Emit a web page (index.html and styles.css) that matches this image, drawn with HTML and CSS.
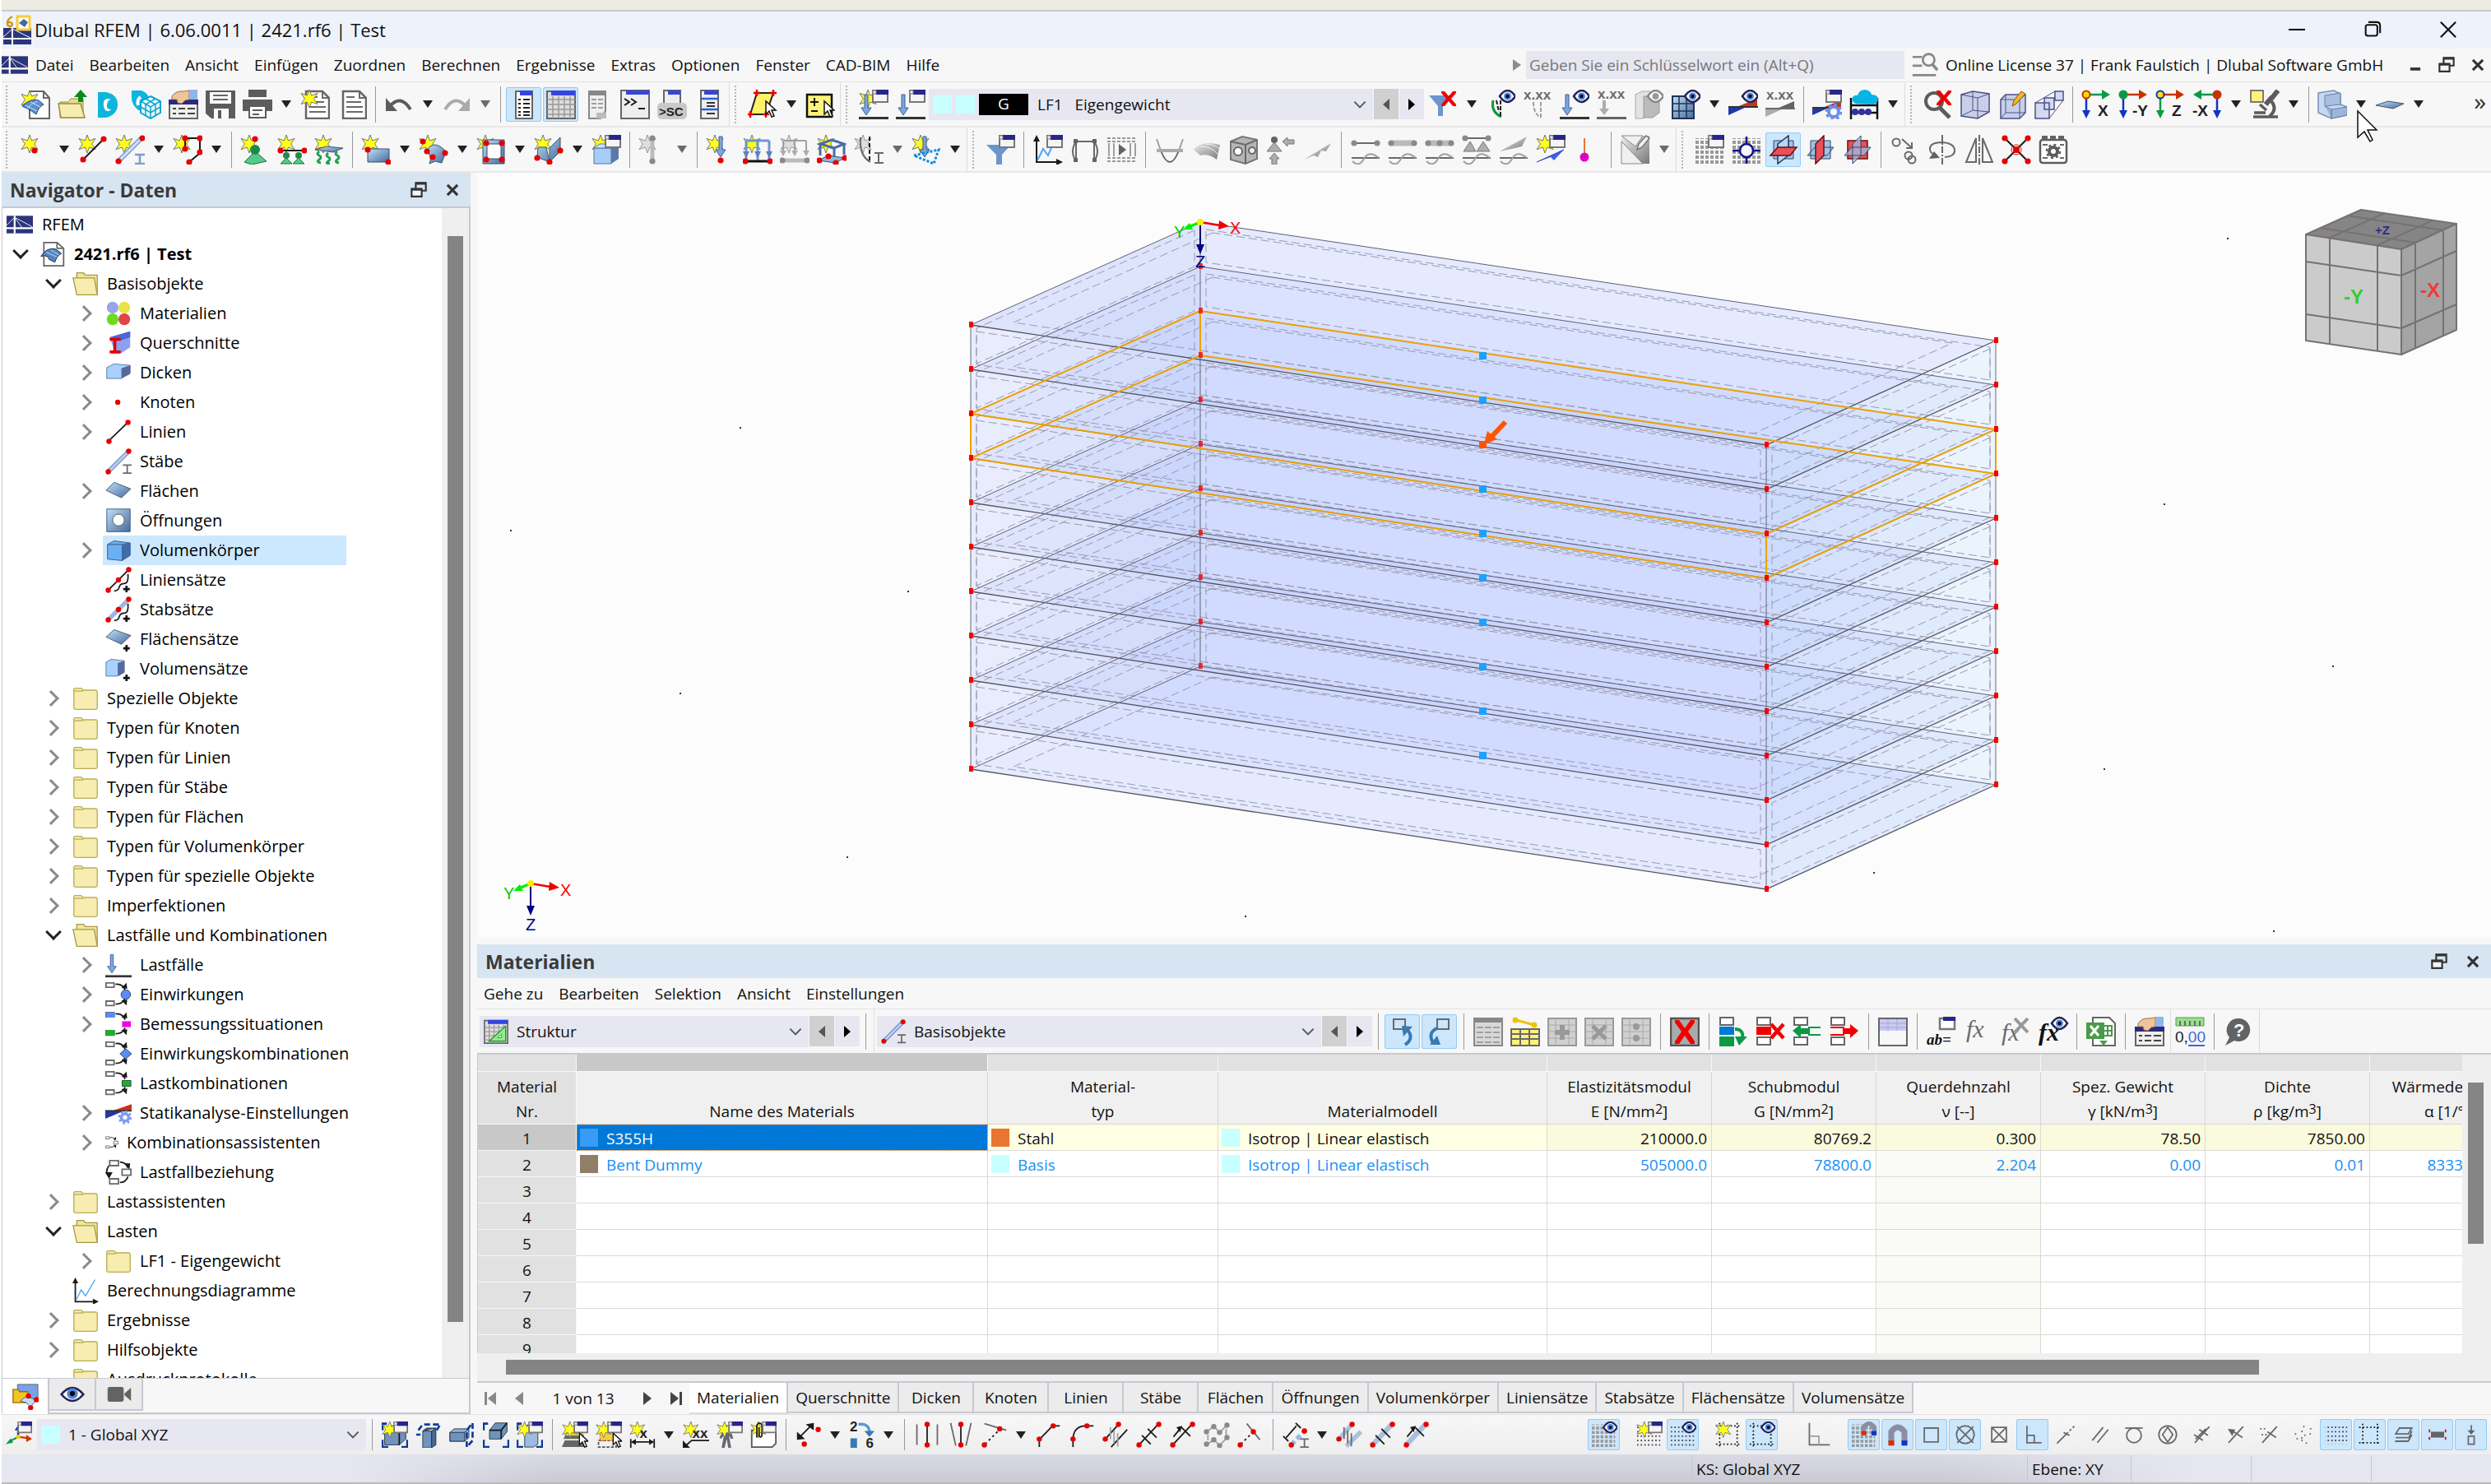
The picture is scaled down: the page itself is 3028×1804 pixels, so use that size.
FILE: index.html
```html
<!DOCTYPE html>
<html lang="de">
<head>
<meta charset="utf-8">
<title>Dlubal RFEM | 6.06.0011 | 2421.rf6 | Test</title>
<link rel="stylesheet" href="styles.css">
</head>
<body>
<svg class="sprite" aria-hidden="true">
<defs>
<linearGradient id="gb" x1="0" y1="0" x2="1" y2="1"><stop offset="0" stop-color="#bfe0fa"/><stop offset="1" stop-color="#47699c"/></linearGradient>
<linearGradient id="gg" x1="0" y1="0" x2="1" y2="1"><stop offset="0" stop-color="#eee"/><stop offset="1" stop-color="#777"/></linearGradient>
<pattern id="dots" width="6" height="6" patternUnits="userSpaceOnUse"><path d="M1 1h4v4H1z" fill="#999"/></pattern>
<pattern id="fine" width="5" height="6" patternUnits="userSpaceOnUse"><path d="M1 1h2v2H1z" fill="#445"/></pattern>
<path id="star" d="M11 0l2.6 7 7.4-2.6-4.4 6.6 4.4 6.6-7.4-2.6L11 22l-2.6-7L1 17.6 5.4 11 1 4.4 8.4 7z" fill="#ffff1a" stroke="#777"/>
<path id="gstar" d="M11 0l2.6 7 7.4-2.6-4.4 6.6 4.4 6.6-7.4-2.6L11 22l-2.6-7L1 17.6 5.4 11 1 4.4 8.4 7z" fill="#ddd" stroke="#999"/>
<g id="win"><path d="M17 1h18v14H17z" fill="#f4f4f4" stroke="#777" stroke-width="2"/><path d="M21 0h15v6H21z" fill="#26268c"/><path d="M17 1h4v4h-4z" fill="#eee" stroke="#777"/></g>
<g id="eye"><path d="M17 8q9.500-14 19 0q-9.500 14-19 0z" fill="#fff" stroke="#232358" stroke-width="2.500"/><circle cx="26.500" cy="8" r="4.500" fill="#4f86dd"/><circle cx="26.500" cy="8" r="2.200" fill="#001"/></g>
<g id="geye"><path d="M17 8q9.500-14 19 0q-9.500 14-19 0z" fill="#fff" stroke="#888" stroke-width="2.500"/><circle cx="26.500" cy="8" r="4" fill="#999"/></g>
<circle id="n" r="3.600" fill="#e60000"/>
<circle id="gn" r="3.600" fill="#8a8a8a"/>
<path id="cur" d="M0 0v16l4-4 3 7 3-1-3-7h5z" fill="#fff" stroke="#111" stroke-width="1.500"/>
<path id="redx" d="M16 2l4 0 5 6 5-6h4l0 2-6 7 6 7v2h-4l-5-6-5 6h-4v-2l6-7-6-7z" fill="#f00000"/>
<path id="larr" d="M7 6h4v16h4l-6 9-6-9h4z" fill="#7fa6dc" stroke="#3d5c94"/>
<g id="wave"><path d="M1 28h34" class="g" stroke-width="3"/><path d="M2 32q8 8 14-3t18-1" class="lg"/></g>
<g id="three"><path d="M4 7v24M18 7v24M32 7v24M4 7h28" stroke="#6f96d0" stroke-width="3" fill="none"/><path d="M0 20h8l-4 8zM14 20h8l-4 8zM28 20h8l-4 8z" fill="#5b80bd"/></g>
<g id="boxes"><path d="M1 2h11v6H1zM1 27h11v6H1z" class="g" fill="#fff"/><path d="M14 4q10-1 13 8M14 31q10 0 13-8" class="k"/><path d="M22 9l8 1-1-8zM22 26l8-1-1 8z" class="fk"/></g>
<g id="cubeb"><path d="M4 10l8-7h21v18l-9 8H4z" fill="#6f93bd" stroke="#234"/><path d="M4 10h20v19M24 10l9-7" class="k" stroke-width="1"/></g>
<g id="corner"><path d="M1 25v10h8M27 35h8V25M1 12V3h6" fill="none" stroke="#0b3a9c" stroke-width="3"/></g>
<path id="fold" d="M2 6q0-2 2-2h8l3 3h17q2 0 2 2v22q0 2-2 2H4q-2 0-2-2z" fill="#f7edb0" stroke="#b9ac55" stroke-width="1.500"/>
<path id="plus" d="M29 26v9M24.500 30.500h9" stroke="#111" stroke-width="3"/>
</defs>
<symbol id="logo" viewBox="0 0 36 36"><path d="M0 6h36v24H0z" fill="#2b3579"/><path d="M0 23h36M11 6v24" stroke="#fff" stroke-width="2.500"/><path d="M11 8L0 19M11 8l10 14M11 8l24 13" stroke="#fff" fill="none"/></symbol>
<symbol id="applogo" viewBox="0 0 36 36"><path d="M0 16h34v20H0z" fill="#2b3579"/><path d="M0 29h34M11 16v20" stroke="#fff" stroke-width="2"/><path d="M11 17L0 27M11 17l22 11" stroke="#fff" fill="none"/><path d="M17 2h15v16H17z" fill="#fff" stroke="#f7cc3a" stroke-width="3"/><path d="M19 10l6-5 5 4-4 6z" fill="#45699a"/><path d="M11 2Q4 6 5 11a3 3 0 0 0 6 0a3 3 0 0 0-5-1" fill="none" stroke="#c99a1c" stroke-width="2.500"/></symbol>
<symbol id="new" viewBox="0 0 36 36"><path d="M11 2h17l7 8v25H11z" fill="#fff" stroke="#666" stroke-width="2"/><path d="M28 2v8h7" class="g"/><use href="#star" y="1"/><path d="M2 20q10-10 20-7l6 5q-6 3-9 12l-7-5z" fill="#5d8fce" stroke="#234a80"/><path d="M6 19l14 7M12 15l12 6M7 24q6-8 14-10" stroke="#cfe0f5" fill="none"/></symbol>
<symbol id="open" viewBox="0 0 36 36"><path d="M3 34V15h10l3-4h15v23z" fill="#e8dc8c" stroke="#9a8f40"/><path d="M1 17h27l5 17H4z" fill="#f7edb0" stroke="#9a8f40" stroke-width="1.500"/><path d="M25 15V9h-5l8-9 8 9h-5v6z" fill="#0a8a1c"/></symbol>
<symbol id="cc" viewBox="0 0 36 36"><path d="M4 3h10q14 3 14 15T14 34H4z" fill="#0db5dd"/><path d="M20 12q-7-3-9 3-1 9 4 11 4 0 5-2-6 0-5-6t5-6z" fill="#fff"/></symbol>
<symbol id="cube3" viewBox="0 0 36 36"><path d="M0 1h12q9 3 9 12v12H8Q0 18 0 10z" fill="#0db5dd"/><path d="M11 9q-5 3-3 10" stroke="#fff" stroke-width="4" fill="none"/><path d="M23 8l12 6v14l-12 7-12-7V14z" fill="#e8fbff" stroke="#0aa5cc" stroke-width="2"/><path d="M11 14l12 7 12-7M23 21v14M17 11l12 7v14M29 11l-12 7v14M11 21l12 7 12-7" stroke="#0aa5cc" fill="none" stroke-width="1.500"/></symbol>
<symbol id="hand" viewBox="0 0 36 36"><path d="M1 14h34v21H1z" fill="#eee" stroke="#666" stroke-width="2"/><path d="M0 12h36v6H0z" fill="#2a2a80"/><path d="M5 23h4M12 23h8M23 23h9M5 29h4M12 29h8M23 29h9" stroke="#444" stroke-width="2"/><path d="M4 8Q9 1 18 2l7-1v11l-5 1-4 4-5-1-1-4-6 0z" fill="#f0c49a" stroke="#a06a44"/><path d="M25 0h10v12l-10 0z" fill="#8db7ea"/></symbol>
<symbol id="save" viewBox="0 0 36 36"><path d="M0 1h36v34H7l-7-6z" fill="#5c5c5c"/><path d="M5 3h26v14H5zM10 23h18v12H10z" fill="#fafafa"/><path d="M9 7h18M9 12h18" stroke="#666" stroke-width="2"/><path d="M15 25h4v10h-4z" fill="#5c5c5c"/></symbol>
<symbol id="print" viewBox="0 0 36 36"><path d="M7 0h22v9H7zM0 12h36v14H0z" fill="#5c5c5c"/><path d="M8 20h20v14H8z" fill="#fff" stroke="#5c5c5c" stroke-width="2"/><path d="M12 25h12M12 30h8" stroke="#5c5c5c" stroke-width="2"/></symbol>
<symbol id="doc" viewBox="0 0 36 36"><path d="M7 2h20l8 8v25H7z" fill="#fff" stroke="#666" stroke-width="2.500"/><path d="M27 2v8h8M11 15h18M11 21h20M11 27h20M11 9h10" class="g"/></symbol>
<symbol id="sdoc" viewBox="0 0 36 36"><use href="#doc" width="36" height="36"/><use href="#star"/></symbol>
<symbol id="undo" viewBox="0 0 36 36"><path d="M7 20Q20 5 32 24" fill="none" stroke="#5c5c5c" stroke-width="4"/><path d="M2 10v16h14z" fill="#5c5c5c"/></symbol>
<symbol id="redo" viewBox="0 0 36 36"><path d="M29 20Q16 5 4 24" fill="none" stroke="#aaa" stroke-width="4"/><path d="M34 10v16H20z" fill="#aaa"/></symbol>
<symbol id="list" viewBox="0 0 36 36"><path d="M8 2h20v33H8z" fill="#fff" stroke="#666" stroke-width="2"/><path d="M13 1h15v6H13z" fill="#3445e0"/><path d="M11 12h3M17 12h8M11 17h3M17 17h8M11 22h3M17 22h8M11 27h3M17 27h8M11 31h3M17 31h8" stroke="#222" stroke-width="2"/></symbol>
<symbol id="grid" viewBox="0 0 36 36"><path d="M1 2h34v33H1z" fill="#ddd" stroke="#666" stroke-width="2"/><path d="M6 1h29v6H6z" fill="#3445e0"/><path d="M1 12h34M1 18h34M1 24h34M1 30h34M8 8v27M15 8v27M22 8v27M29 8v27" stroke="#999" fill="none" stroke-width="1.500"/></symbol>
<symbol id="report" viewBox="0 0 36 36"><path d="M7 2h20v24l-6 9H7z" fill="#eee" stroke="#888" stroke-width="2"/><path d="M7 2h20v5H7z" fill="#888"/><path d="M10 12h6M18 12h6M10 17h6M18 17h6M10 22h6M18 22h6" class="lg"/><path d="M16 28h12v7H16z" fill="#bbb"/></symbol>
<symbol id="cons" viewBox="0 0 36 36"><path d="M1 1h34v34H1z" fill="#eee" stroke="#666" stroke-width="2"/><path d="M7 1h28v5H7z" fill="#3445e0"/><path d="M5 11l6 4-6 4M13 11l6 4-6 4M22 23h8" class="k" stroke-width="2.500"/></symbol>
<symbol id="panel" viewBox="0 0 36 36"><path d="M8 1h21v34H8z" fill="#eee" stroke="#666" stroke-width="2"/><path d="M12 1h17v5H12z" fill="#3445e0"/><path d="M8 11h21M8 24h21" stroke="#2a62d8" stroke-width="2.500"/><path d="M15 16h10M15 20h10M15 29h10" stroke="#333" stroke-width="2"/></symbol>
<symbol id="poly" viewBox="0 0 36 36"><path d="M11 4h20L22 30H3z" fill="#fff26b" stroke="#222" stroke-width="2"/><path d="M7 4h8M11 0v8M27 4h8M31 0v8M0 30h7M3 26v8M18 30h8M22 26v8" stroke="#e00" stroke-width="2.500"/><use href="#cur" x="22" y="14"/></symbol>
<symbol id="pm" viewBox="0 0 36 36"><path d="M2 6h30v27H2z" fill="#fff27c" stroke="#111" stroke-width="2.500"/><path d="M6 15h10M11 10v10M7 26h8" stroke="#111" stroke-width="2"/><use href="#cur" x="23" y="14"/></symbol>
<symbol id="sload" viewBox="0 0 36 36"><use href="#star"/><use href="#win"/><use href="#larr"/><path d="M0 33h36v3H0z" fill="#333"/></symbol>
<symbol id="load" viewBox="0 0 36 36"><use href="#win"/><use href="#larr"/><path d="M0 33h36v3H0z" fill="#333"/></symbol>
<symbol id="nload" viewBox="0 0 36 36"><use href="#larr" y="-2"/><path d="M0 32h36v3H0z" fill="#333"/></symbol>
<symbol id="filx" viewBox="0 0 36 36"><path d="M1 7h28L18 20v12h-6V20z" fill="#6d95cd"/><use href="#redx"/></symbol>
<symbol id="eyed" viewBox="0 0 36 36"><path d="M9 13q-3 14 10 20" fill="none" stroke="#0a9a3c" stroke-width="3"/><path d="M18 13v20M13 13l3 14" class="k" stroke-width="2.500" stroke-dasharray="5 2"/><use href="#eye"/></symbol>
<symbol id="eyel" viewBox="0 0 36 36"><use href="#eye"/><use href="#larr"/><path d="M0 33h36v3H0z" fill="#333"/></symbol>
<symbol id="geyeb" viewBox="0 0 36 36"><path d="M2 6l8-4h10v28l-9 5H2z" fill="#e2e2e2" stroke="#aaa"/><path d="M12 8h14l5 2v18l-8 6H12z" fill="#bbb" stroke="#999"/><use href="#geye"/></symbol>
<symbol id="mesh" viewBox="0 0 36 36"><path d="M2 8h26v27H2z" fill="url(#gb)" stroke="#235" stroke-width="2"/><path d="M2 17h26M2 26h26M10 8v27M19 8v27" stroke="#235" stroke-width="1.500"/><use href="#eye"/></symbol>
<symbol id="res" viewBox="0 0 36 36"><path d="M0 21h22L0 31z" fill="#2338a8"/><path d="M10 21L35 11v10z" fill="#c8331a"/><path d="M0 21h36" stroke="#333" stroke-width="2"/><use href="#eye"/></symbol>
<symbol id="calc" viewBox="0 0 36 36"><path d="M0 22h20L0 31z" fill="#2338a8"/><path d="M12 22L35 13v9z" fill="#c8331a"/><path d="M0 22h30" stroke="#333" stroke-width="2"/><use href="#win"/><circle cx="26" cy="27" r="6" fill="#fff" stroke="#6e8fe8" stroke-width="4"/><circle cx="26" cy="27" r="9" fill="none" stroke="#6e8fe8" stroke-width="3" stroke-dasharray="3.500 3.600"/></symbol>
<symbol id="cloud" viewBox="0 0 36 36"><path d="M2 10v26M34 10v26M2 19h32M2 28h32" stroke="#111" stroke-width="2.500"/><path d="M8 17q-6-2-4-8 3-3 6-2 2-7 9-7 7 1 8 6 8 0 8 6-1 5-6 6z" fill="#08b4e4"/><circle cx="7" cy="27" r="4" fill="#32329c"/><circle cx="15" cy="27" r="4" fill="#32329c"/><circle cx="23" cy="27" r="4" fill="#32329c"/></symbol>
<symbol id="magx" viewBox="0 0 36 36"><circle cx="13" cy="14" r="10" fill="none" stroke="#5c5c5c" stroke-width="4"/><path d="M20 22l12 12" stroke="#5c5c5c" stroke-width="5"/><use href="#redx" y="-1"/></symbol>
<symbol id="wbox" viewBox="0 0 36 36"><path d="M1 6l14-4 20 3v22l-14 8L1 32z" fill="#c9cfe8" stroke="#4a5288" stroke-width="1.500"/><path d="M1 6l20 4 14-5M21 10v25M15 2v23L1 32M15 25l20 2" fill="none" stroke="#4a5288"/></symbol>
<symbol id="pbox" viewBox="0 0 36 36"><path d="M4 12l6-6h24v22l-7 7H4z" fill="#c9cfe8" stroke="#4a5288" stroke-width="1.500"/><path d="M4 12h23v23M27 12l7-6M10 6v22l-6 7M10 28h24" fill="none" stroke="#4a5288"/><path d="M18 20l2-7L29 2l5 3-11 12z" fill="#f4b32c" stroke="#8a5a10"/></symbol>
<symbol id="persp" viewBox="0 0 36 36"><path d="M1 16h17v19H1zM12 10h12v14H12zM25 2h10v11H25z" fill="#d5d9f0" stroke="#4a5288" stroke-width="1.500"/><path d="M1 16L25 2M18 35L35 13" stroke="#4a5288"/></symbol>
<symbol id="micro" viewBox="0 0 36 36"><path d="M1 1h15v14H1z" fill="#fff27c" stroke="#555" stroke-width="1.500"/><path d="M34 1l-8 10M27 9l-8 9" stroke="#5c5c5c" stroke-width="6"/><path d="M26 14q8 10-2 18" fill="none" stroke="#5c5c5c" stroke-width="4"/><path d="M4 33h30M5 28h14M12 18l8 7" stroke="#5c5c5c" stroke-width="3.500"/></symbol>
<symbol id="chair" viewBox="0 0 36 36"><path d="M1 4l19-3 8 4v13l8 3v10l-19 4-16-7z" fill="#c3d9f4" stroke="#7890b4" stroke-width="1.500"/><path d="M9 7l19-3v14l-19 2z" fill="#a9bfe0" stroke="#6a82a8"/><path d="M9 20l8 4v11M17 24l19-3v10l-19 4z" fill="#9db5d8" stroke="#6a82a8"/></symbol>
<symbol id="plane" viewBox="0 0 36 36"><path d="M1 19l15-5 19 3-13 6z" fill="url(#gb)" stroke="#456" stroke-width="1"/></symbol>
<symbol id="snode" viewBox="0 0 36 36"><use href="#star"/><use href="#n" x="17" y="19"/></symbol>
<symbol id="sline" viewBox="0 0 36 36"><use href="#star"/><path d="M6 30L31 5" class="k" stroke-width="2.500"/><use href="#n" x="6" y="30"/><use href="#n" x="31" y="5"/></symbol>
<symbol id="smem" viewBox="0 0 36 36"><use href="#star"/><path d="M4 32L32 4" stroke="#7f9bd0" stroke-width="6"/><path d="M4 32L32 4" stroke="#cfe0fa" stroke-width="3"/><use href="#n" x="4" y="32"/><use href="#n" x="33" y="4"/><path d="M24 24h12M24 35h12M30 24v11" stroke="#7f9bd0" stroke-width="2.500"/></symbol>
<symbol id="spoly" viewBox="0 0 36 36"><use href="#star"/><path d="M15 17V4h18v18L20 33" class="k" stroke-width="2.500"/><use href="#n" x="15" y="17"/><use href="#n" x="15" y="4"/><use href="#n" x="33" y="4"/><use href="#n" x="33" y="21"/><use href="#n" x="20" y="33"/></symbol>
<symbol id="ssup" viewBox="0 0 36 36"><use href="#star"/><use href="#n" x="18" y="5"/><path d="M18 20L5 33l9 3 18-4z" fill="#58c88a" stroke="#0a7a3c"/><circle cx="18" cy="18" r="6" fill="#1c8a48"/></symbol>
<symbol id="slsup" viewBox="0 0 36 36"><use href="#star"/><path d="M4 19h30" class="k"/><use href="#n" x="4" y="19"/><use href="#n" x="33" y="19"/><path d="M11 28l-7 7h14zM26 28l-7 7h14z" fill="#58c88a" stroke="#0a7a3c"/><circle cx="11" cy="25" r="4" fill="#1c8a48"/><circle cx="26" cy="25" r="4" fill="#1c8a48"/></symbol>
<symbol id="sssup" viewBox="0 0 36 36"><use href="#star"/><path d="M1 18l14-4 20 2-12 5z" fill="url(#gb)" stroke="#456"/><path d="M6 20q-4 3 0 5t0 5 2 4M17 22q-4 3 0 5t0 5 2 3M28 20q-4 3 0 5t0 5 2 4" fill="none" stroke="#20a050" stroke-width="3"/></symbol>
<symbol id="srect" viewBox="0 0 36 36"><use href="#star"/><path d="M8 17h26v16H8z" fill="url(#gb)" stroke="#356"/><use href="#n" x="8" y="18"/><use href="#n" x="33" y="33"/></symbol>
<symbol id="scurv" viewBox="0 0 36 36"><use href="#star"/><path d="M9 20Q18 4 33 20l-5 14-8-2-7 3q4-10-4-15z" fill="url(#gb)" stroke="#356"/><use href="#n" x="5" y="8"/><use href="#n" x="10" y="20"/><use href="#n" x="32" y="22"/><use href="#n" x="17" y="27"/></symbol>
<symbol id="sopen" viewBox="0 0 36 36"><use href="#star"/><path d="M8 6h26v29H8z" fill="url(#gb)" stroke="#356"/><path d="M13 11h17v18H13z" fill="#fff" stroke="#356"/><use href="#n" x="12" y="10"/><use href="#n" x="31" y="10"/><use href="#n" x="12" y="30"/><use href="#n" x="31" y="30"/></symbol>
<symbol id="sfold" viewBox="0 0 36 36"><use href="#star"/><path d="M5 15h10l4 18-15-6zM19 33V16L32 3v17z" fill="url(#gb)" stroke="#356"/><use href="#n" x="4" y="28"/><use href="#n" x="19" y="33"/><use href="#n" x="32" y="19"/></symbol>
<symbol id="ssol" viewBox="0 0 36 36"><use href="#star"/><path d="M3 16h21v19H3z" fill="#a6cdf9" stroke="#579"/><path d="M3 16l7-5h24l-10 5z" fill="#c9e2ff" stroke="#579"/><path d="M24 16l9-5v18l-9 6z" fill="#5c78aa"/><use href="#win"/></symbol>
<symbol id="gmem" viewBox="0 0 36 36"><use href="#gstar"/><path d="M17 4v28" stroke="#bbb" stroke-width="5"/><use href="#gn" x="17" y="4"/><use href="#gn" x="17" y="32"/></symbol>
<symbol id="lnode" viewBox="0 0 36 36"><use href="#star"/><use href="#larr" x="9" y="-4"/><use href="#n" x="18" y="31"/></symbol>
<symbol id="lline" viewBox="0 0 36 36"><use href="#star"/><use href="#three"/><path d="M3 32h30" stroke="#111" stroke-width="3"/><use href="#n" x="3" y="32"/><use href="#n" x="33" y="32"/></symbol>
<symbol id="lmem" viewBox="0 0 36 36"><use href="#gstar"/><path d="M4 7v18M18 7v18M32 7v18M4 7h28" class="lg"/><path d="M0 19h8l-4 7zM14 19h8l-4 7zM28 19h8l-4 7z" class="flg"/><path d="M3 31h30" stroke="#bbb" stroke-width="5"/><use href="#gn" x="3" y="31"/><use href="#gn" x="33" y="31"/></symbol>
<symbol id="lsurf" viewBox="0 0 36 36"><use href="#star"/><path d="M4 11l14-5 15 5-12 5zM4 11v14M21 16v12M33 11v13" fill="none" stroke="#4a6ca8" stroke-width="3"/><path d="M2 31l12-6 20 3-12 6z" fill="#8fb6e4" stroke="#356"/><use href="#n" x="3" y="31"/><use href="#n" x="14" y="26"/><use href="#n" x="34" y="28"/><use href="#n" x="23" y="34"/></symbol>
<symbol id="gimp" viewBox="0 0 36 36"><use href="#gstar"/><path d="M8 3q-2 22 12 30" class="g" stroke-width="3"/><path d="M19 2v31" class="k" stroke-dasharray="5 3"/><path d="M25 22h11M25 34h11M30 22v12" class="g"/></symbol>
<symbol id="sfree" viewBox="0 0 36 36"><use href="#star"/><use href="#larr" x="7" y="-4"/><path d="M3 25l30-7-6 17z" fill="none" stroke="#0a8ade" stroke-width="3" stroke-dasharray="3 2"/></symbol>
<symbol id="fil" viewBox="0 0 36 36"><path d="M1 12h30L20 24v12h-7V24z" fill="#6d95cd"/><use href="#win"/></symbol>
<symbol id="diag" viewBox="0 0 36 36"><path d="M4 5v28h28" class="k" stroke-width="2.500"/><path d="M0 8l4-8 4 8zM28 29v8l8-4z" class="fk"/><path d="M5 31l7-14 6 8 6-14" fill="none" stroke="#49a8f4" stroke-width="2"/><use href="#win"/></symbol>
<symbol id="ndiag" viewBox="0 0 36 36"><path d="M4 5v28h28" class="k" stroke-width="2"/><path d="M0 8l4-8 4 8zM28 29v8l8-4z" class="fk"/><path d="M5 31l7-14 6 8L31 3" fill="none" stroke="#49a8f4" stroke-width="1.500"/></symbol>
<symbol id="frame" viewBox="0 0 36 36"><path d="M7 32V8h22v24M7 8Q-1 20 7 32M29 8q8 12 0 24" class="g"/><path d="M4 5h5v5H4zM27 5h5v5h-5zM4 28h5v5H4zM27 28h5v5h-5z" class="fg"/></symbol>
<symbol id="film" viewBox="0 0 36 36"><path d="M0 4h36M0 8h36M0 28h36M0 32h36" stroke="#999" stroke-width="2" stroke-dasharray="4 2"/><path d="M8 10v16M28 10v16M2 10v16M34 10v16" class="lg"/><path d="M14 11v14l9-7z" class="fg"/></symbol>
<symbol id="para" viewBox="0 0 36 36"><path d="M2 5l5 14h22l5-14" class="lg"/><path d="M7 19q11 28 22 0" class="g"/><path d="M2 19h32" stroke="#aaa" stroke-width="4"/></symbol>
<symbol id="fan" viewBox="0 0 36 36"><path d="M2 18Q12 6 34 12l-4 18q-10-8-20-5z" fill="url(#gg)"/><path d="M10 14q14 0 22 10M16 11q12 0 17 6" fill="none" stroke="#eee"/></symbol>
<symbol id="die" viewBox="0 0 36 36"><path d="M2 8l14-6 18 4v23l-14 6-18-5z" fill="#b5b5b5" stroke="#777" stroke-width="2"/><path d="M2 8l18 4 14-6M20 12v23" class="g"/><circle cx="11" cy="20" r="5" fill="#fff" stroke="#666" stroke-width="2"/><circle cx="28" cy="19" r="4" fill="#eee" stroke="#666" stroke-width="2"/></symbol>
<symbol id="reac" viewBox="0 0 36 36"><circle cx="10" cy="6" r="4" class="fg"/><path d="M10 9L1 20h18zM10 22l6 7h-3v7H7v-7H4z" class="flg" stroke="#777"/><path d="M20 8l6-5v3h8v5h-8v3z" class="flg" stroke="#777"/></symbol>
<symbol id="wedge" viewBox="0 0 36 36"><path d="M1 30L34 10l-6 10-6-1-4 8-5-2z" fill="url(#gg)"/></symbol>
<symbol id="w1" viewBox="0 0 36 36"><path d="M4 10h28" class="g" stroke-width="3"/><use href="#gn" x="4" y="10"/><use href="#gn" x="32" y="10"/><use href="#wave"/></symbol>
<symbol id="w2" viewBox="0 0 36 36"><path d="M4 10h28" stroke="#bbb" stroke-width="7"/><use href="#gn" x="4" y="10"/><use href="#gn" x="32" y="10"/><use href="#wave"/></symbol>
<symbol id="w3" viewBox="0 0 36 36"><path d="M4 10h28" stroke="#bbb" stroke-width="7"/><use href="#gn" x="4" y="10"/><use href="#gn" x="18" y="10"/><use href="#gn" x="32" y="10"/><use href="#wave"/></symbol>
<symbol id="w4" viewBox="0 0 36 36"><path d="M4 4h28" class="g" stroke-width="3"/><use href="#gn" x="4" y="4"/><use href="#gn" x="32" y="4"/><path d="M10 8L2 20h15zM26 8l-8 12h16z" class="flg" stroke="#777"/><use href="#wave"/></symbol>
<symbol id="w5" viewBox="0 0 36 36"><path d="M1 20L34 2l-6 12-8 2z" fill="url(#gg)"/><use href="#wave"/></symbol>
<symbol id="sres" viewBox="0 0 36 36"><path d="M1 33l33-15-12 13-4-4z" fill="#3e62f0"/><path d="M1 33l33-15" stroke="#223a9a"/><use href="#star"/><use href="#win"/></symbol>
<symbol id="pin" viewBox="0 0 36 36"><path d="M14 4v20" stroke="#e8743a" stroke-width="2"/><circle cx="14" cy="27" r="5.500" fill="#e000c8"/></symbol>
<symbol id="gpen" viewBox="0 0 36 36"><path d="M1 1h34v34H1z" fill="url(#gg)"/><path d="M1 8l26 27H1zM1 1h26L18 14z" fill="#f0f0f0" stroke="#888"/><path d="M20 18l2-7L31 1l4 3-9 11z" fill="#eee" stroke="#777" stroke-width="1.500"/></symbol>
<symbol id="gridwin" viewBox="0 0 36 36"><path d="M1 4h34v31H1z" fill="url(#dots)"/><use href="#win"/></symbol>
<symbol id="gridc" viewBox="0 0 36 36"><path d="M1 4h34v31H1z" fill="url(#dots)"/><path d="M18 2v33M1 19h34" stroke="#10108c" stroke-width="2.500"/><circle cx="18" cy="19" r="8" fill="#f7f7f7" stroke="#10108c" stroke-width="2.500"/></symbol>
<symbol id="pl1" viewBox="0 0 36 36"><path d="M6 7h24v22H6z" fill="#9cc4ec" stroke="#346"/><path d="M11 35V11L24 1v24z" fill="#b9d6f4" stroke="#235" stroke-width="1.500"/><path d="M2 25l9-10h23l-8 10z" fill="#e8505a" stroke="#611" stroke-width="1.500"/></symbol>
<symbol id="pl2" viewBox="0 0 36 36"><path d="M6 7h24v22H6zM2 25l9-10h23l-8 10z" fill="#9cc4ec" stroke="#346"/><path d="M12 35V11L22 1v24z" fill="#e8505a" stroke="#611" stroke-width="1.500"/></symbol>
<symbol id="pl3" viewBox="0 0 36 36"><path d="M6 7h24v22H6z" fill="#e8505a" stroke="#611" stroke-width="1.500"/><path d="M2 25l9-10h23l-8 10zM12 35V11L22 1v24z" fill="#9cc4ec" fill-opacity=".7" stroke="#346"/></symbol>
<symbol id="chain" viewBox="0 0 36 36"><circle cx="7" cy="9" r="4.500" class="g"/><circle cx="22" cy="25" r="4.500" class="g"/><circle cx="26" cy="30" r="4.500" class="g"/><path d="M14 5l11 10M26 9v7h-7" class="g"/></symbol>
<symbol id="rot" viewBox="0 0 36 36"><path d="M12 25Q2 23 3 16T18 9q14 1 15 9t-12 9" class="g" stroke-width="3"/><path d="M8 20l-6 9 13-1z" class="fg"/><path d="M18 0v36" class="g" stroke-dasharray="8 2 2 2"/></symbol>
<symbol id="mirr" viewBox="0 0 36 36"><path d="M14 4v29H2zM22 4v29h12z" class="g" stroke-width="2.500"/><path d="M18 0v36" class="g" stroke-dasharray="8 2 2 2"/></symbol>
<symbol id="xconn" viewBox="0 0 36 36"><path d="M4 4l28 28M32 4L4 32" class="k" stroke-width="2.500"/><use href="#n" x="4" y="4"/><use href="#n" x="32" y="4"/><use href="#n" x="4" y="32"/><use href="#n" x="32" y="32"/><circle cx="18" cy="18" r="4" fill="#e60000"/><circle cx="18" cy="18" r="6" fill="none" stroke="#e60000"/></symbol>
<symbol id="gear" viewBox="0 0 36 36"><rect x="2" y="6" width="32" height="28" rx="3" fill="#fff" stroke="#5c5c5c" stroke-width="2.500"/><path d="M4 1h7v5H4zM14 1h7v5h-7zM24 1h7v5h-7z" class="fg"/><circle cx="18" cy="20" r="5" fill="none" stroke="#5c5c5c" stroke-width="4"/><circle cx="18" cy="20" r="8" fill="none" stroke="#5c5c5c" stroke-width="2.500" stroke-dasharray="3 3.300"/><path d="M5 12h6M5 28h6M26 12h5M26 28h5" class="g"/></symbol>
<symbol id="file" viewBox="0 0 36 36"><path d="M6 2h18l9 8v24H6z" fill="#fff" stroke="#666" stroke-width="2"/><path d="M24 2v8h9" class="g"/><path d="M2 21Q10 8 22 11l8 6q-6 3-9 12l-8-4-1-3-5-2z" fill="#5486c4" stroke="#123"/><path d="M9 15l15 7M15 12l12 7" stroke="#cde" fill="none"/></symbol>
<symbol id="folder" viewBox="0 0 36 36"><use href="#fold"/><path d="M2 8h12l2-1h17" fill="none" stroke="#c9bd6a" stroke-width="2"/></symbol>
<symbol id="foldo" viewBox="0 0 36 36"><path d="M6 30V3h9l3 3h16v26z" fill="#f0e59c" stroke="#a89b45" stroke-width="1.500"/><path d="M1 10h29l4 23H6z" fill="#f7edb0" stroke="#a89b45" stroke-width="1.500"/></symbol>
<symbol id="mat" viewBox="0 0 36 36"><circle cx="10" cy="10" r="8" fill="#9aa4e8"/><circle cx="26" cy="10" r="8" fill="#e8e24a"/><circle cx="10" cy="26" r="8" fill="#6adc1c"/><circle cx="26" cy="26" r="8" fill="#e04444"/></symbol>
<symbol id="cs" viewBox="0 0 36 36"><path d="M6 10l28-8v22L20 33H8l4-6z" fill="#8ca0f0"/><path d="M6 10l28-8v8l-14 5z" fill="#4a66d8"/><path d="M6 13h15M6 30h15M13 13v17" stroke="#e00000" stroke-width="4"/></symbol>
<symbol id="thick" viewBox="0 0 36 36"><path d="M2 11l10-5 22 2v10l-12 8H2z" fill="#a9d0ff" stroke="#579"/><path d="M22 12l12-4v12l-12 6z" fill="#56699c"/></symbol>
<symbol id="node" viewBox="0 0 36 36"><use href="#n" x="17" y="18"/></symbol>
<symbol id="line" viewBox="0 0 36 36"><path d="M5 30L31 5" class="k" stroke-width="2.500"/><use href="#n" x="5" y="31"/><use href="#n" x="31" y="5"/></symbol>
<symbol id="mem" viewBox="0 0 36 36"><path d="M4 32L32 4" stroke="#7b8fc0" stroke-width="6"/><path d="M4 32L32 4" stroke="#b9d0f4" stroke-width="3"/><use href="#n" x="4" y="32"/><use href="#n" x="32" y="4"/><path d="M24 23h12M24 34h12M30 23v11" class="g" stroke-width="2.500"/></symbol>
<symbol id="surf" viewBox="0 0 36 36"><path d="M1 17L12 6l23 9-13 12z" fill="url(#gb)" stroke="#456"/></symbol>
<symbol id="hole" viewBox="0 0 36 36"><path d="M2 2h32v31H2z" fill="url(#gb)" stroke="#357"/><circle cx="18" cy="17" r="8" fill="#fff" stroke="#555"/></symbol>
<symbol id="vol" viewBox="0 0 36 36"><path d="M3 10l9-5 22 3v17l-11 7-20-2z" fill="#6cb0f4" stroke="#357"/><path d="M3 10h20v22M23 10l11-2" fill="none" stroke="#357"/><path d="M23 11l11-3v17l-11 7z" fill="#3d6ca8"/></symbol>
<symbol id="lset" viewBox="0 0 36 36"><path d="M4 32L32 4" class="k" stroke-width="3"/><path d="M12 33q6 0 7-5t7-5 5-13" class="k" stroke-width="1.500"/><use href="#n" x="4" y="32"/><use href="#n" x="18" y="18"/><use href="#n" x="32" y="4"/><use href="#plus"/></symbol>
<symbol id="mset" viewBox="0 0 36 36"><path d="M4 32L32 4" stroke="#9db8e4" stroke-width="6"/><path d="M12 33q6 0 7-5t7-5 5-13" class="k" stroke-width="1.500"/><use href="#n" x="4" y="32"/><use href="#n" x="18" y="18"/><use href="#n" x="32" y="4"/><use href="#plus"/></symbol>
<symbol id="sset" viewBox="0 0 36 36"><path d="M1 15L12 5l23 8-13 12z" fill="url(#gb)" stroke="#456"/><use href="#plus"/></symbol>
<symbol id="vset" viewBox="0 0 36 36"><path d="M1 9l7-4 18 2v16l-9 5H1z" fill="#a9d0ff" stroke="#579"/><path d="M17 10l9-3v16l-9 5z" fill="#56699c"/><use href="#plus"/></symbol>
<symbol id="act" viewBox="0 0 36 36"><use href="#boxes"/><circle cx="28" cy="18" r="6.500" fill="#5a8cf8" stroke="#345"/></symbol>
<symbol id="situ" viewBox="0 0 36 36"><use href="#boxes"/><path d="M1 2h12v7H1z" fill="#5a8cf8"/><path d="M1 26h12v7H1z" fill="#1cb028"/><path d="M23 14h12v8H23z" fill="#f000e8"/></symbol>
<symbol id="acomb" viewBox="0 0 36 36"><use href="#boxes"/><path d="M28 11l8 7-8 7-8-7z" fill="#5a8cf8" stroke="#345"/></symbol>
<symbol id="lcomb" viewBox="0 0 36 36"><use href="#boxes"/><path d="M23 14h12v8H23z" fill="#1cb028" stroke="#243"/></symbol>
<symbol id="stat" viewBox="0 0 36 36"><path d="M0 15h26L0 26z" fill="#2338a8"/><path d="M10 15L36 6v9z" fill="#c8331a"/><path d="M0 15h36" stroke="#333" stroke-width="2"/><circle cx="27" cy="24" r="5" fill="#fff" stroke="#7c9cf0" stroke-width="4"/><circle cx="27" cy="24" r="8" fill="none" stroke="#7c9cf0" stroke-width="3" stroke-dasharray="3 3.280"/></symbol>
<symbol id="wiz" viewBox="0 0 36 36"><use href="#boxes"/><path d="M23 14h12v8H23z" class="g" fill="#fff"/></symbol>
<symbol id="rel" viewBox="0 0 36 36"><path d="M6 2h12v7H6zM23 14h12v8H23zM6 27h12v7H6z" class="g" fill="#fff" stroke-width="2.500"/><path d="M20 4q8 0 11 8M20 32q8 0 11-8M5 9q-4 5-3 12" class="k"/><path d="M0 18h10l-5 9zM26 6l8 0-1 8z" class="fk"/></symbol>
<symbol id="nav1" viewBox="0 0 36 36"><path d="M7 1h28v22H7z" fill="#7aa0e8" stroke="#567"/><path d="M1 26V8h7l2 3h11v15z" fill="#f4c420" stroke="#96700a" stroke-width="1.500"/><path d="M11 24q6-7 11-6l11 5q-4 3-8 9l-6-6z" fill="#bcdcf8" stroke="#357"/><use href="#n" x="22" y="17"/><use href="#n" x="33" y="22"/><use href="#n" x="25" y="33"/></symbol>
<symbol id="nav2" viewBox="0 0 36 36"><path d="M3 18q15-18 30 0q-15 18-30 0z" fill="#fff" stroke="#232358" stroke-width="3"/><circle cx="18" cy="17" r="7.500" fill="#4f86dd"/><circle cx="18" cy="17" r="3.500"/></symbol>
<symbol id="nav3" viewBox="0 0 36 36"><rect x="2" y="8" width="22" height="20" rx="3" class="fg"/><path d="M25 17l9-8v18l-9-8z" class="fg"/></symbol>
<symbol id="tstruct" viewBox="0 0 36 36"><use href="#grid" width="36" height="36"/><path d="M32 10v22H8z" fill="#8af08a" stroke="#2a8a2a" stroke-width="1.500"/><path d="M26 22v5h-6z" fill="#fff" stroke="#2a8a2a"/></symbol>
<symbol id="sel1" viewBox="0 0 36 36"><path d="M7 3h14v12H7z" class="g" fill="#fff"/><path d="M21 34q12-8 2-19" fill="none" stroke="#3a78b4" stroke-width="4"/><path d="M17 11l13 1-11 12z" fill="#3a78b4"/></symbol>
<symbol id="sel2" viewBox="0 0 36 36"><path d="M15 3h14v12H15z" class="g" fill="#fff"/><path d="M15 14q-12 5-5 18" fill="none" stroke="#3a78b4" stroke-width="4"/><path d="M6 34h13l-4-11z" fill="#3a78b4"/></symbol>
<symbol id="tg" viewBox="0 0 36 36"><path d="M1 2h34v33H1z" fill="#d8d8d8" stroke="#888" stroke-width="2"/><path d="M1 2h34v5H1z" fill="#888"/><path d="M4 13h8M14 13h8M24 13h8M4 19h8M14 19h8M24 19h8M4 25h8M14 25h8M24 25h8M4 31h8M14 31h8M24 31h8" class="lg" stroke-width="3"/></symbol>
<symbol id="ty" viewBox="0 0 36 36"><path d="M1 15h34v20H1z" fill="#fff27c" stroke="#666" stroke-width="2"/><path d="M2 21h32M2 27h32M12 15v20M23 15v20" class="g" stroke-width="1.500"/><path d="M7 4l22 6" stroke="#f0c400" stroke-width="3"/><circle cx="6" cy="4" r="3.500" fill="#f0c400"/><circle cx="29" cy="10" r="3.500" fill="#f0c400"/></symbol>
<symbol id="tplus" viewBox="0 0 36 36"><path d="M1 2h34v33H1z" fill="#d0d0d0" stroke="#999" stroke-width="2"/><path d="M1 10h34M1 18h34M1 26h34M10 2v33M26 2v33" stroke="#aaa"/><path d="M15 10h6v6h6v6h-6v6h-6v-6H9v-6h6z" fill="#999"/></symbol>
<symbol id="tmul" viewBox="0 0 36 36"><path d="M1 2h34v33H1z" fill="#d0d0d0" stroke="#999" stroke-width="2"/><path d="M1 10h34M1 18h34M1 26h34M10 2v33M26 2v33" stroke="#aaa"/><path d="M10 11l16 16M26 11L10 27" stroke="#999" stroke-width="5"/></symbol>
<symbol id="tdiv" viewBox="0 0 36 36"><path d="M1 2h34v33H1z" fill="#d0d0d0" stroke="#999" stroke-width="2"/><path d="M1 10h34M1 18h34M1 26h34M10 2v33M26 2v33" stroke="#aaa"/><circle cx="18" cy="12" r="4" fill="#999"/><circle cx="18" cy="26" r="4" fill="#999"/></symbol>
<symbol id="tdel" viewBox="0 0 36 36"><path d="M1 2h34v33H1z" fill="#aaa" stroke="#555" stroke-width="2.500"/><path d="M6 4l5 0 7 10 7-10h5v3l-8 11 8 12v3h-5l-7-10-7 10H6v-3l8-12L6 7z" fill="#f00000"/></symbol>
<symbol id="r1" viewBox="0 0 36 36"><path d="M2 1h16v9H2z" fill="#fff" stroke="#666" stroke-width="2"/><path d="M1 12h18v10H1z" fill="#0078d7"/><path d="M1 24h18v12H1z" fill="#0a9a44"/><path d="M20 15q11 0 9 12" fill="none" stroke="#0a9a44" stroke-width="4"/><path d="M20 24h15l-10 11z" fill="#0a9a44"/></symbol>
<symbol id="r2" viewBox="0 0 36 36"><path d="M2 1h16v9H2zM2 25h16v9H2z" fill="#fff" stroke="#666" stroke-width="2"/><path d="M1 12h18v10H1z" fill="#f00000"/><path d="M19 9l15 17M34 9L19 26" stroke="#f00000" stroke-width="4.500"/></symbol>
<symbol id="r3" viewBox="0 0 36 36"><path d="M2 1h16v9H2zM2 25h16v9H2z" fill="#fff" stroke="#666" stroke-width="2"/><path d="M34 13H20v9h14" fill="none" stroke="#0a9a44" stroke-width="2"/><path d="M0 17l10-8v5h9v7h-9v5z" fill="#0a9a44"/></symbol>
<symbol id="r4" viewBox="0 0 36 36"><path d="M2 1h16v9H2zM2 25h16v9H2z" fill="#fff" stroke="#666" stroke-width="2"/><path d="M1 13h16v9H1" fill="none" stroke="#f00000" stroke-width="2"/><path d="M35 17l-10-8v5h-9v7h9v5z" fill="#f00000"/></symbol>
<symbol id="hdr" viewBox="0 0 36 36"><path d="M1 2h34v33H1z" fill="#f7f7f7" stroke="#666" stroke-width="2"/><path d="M2 3h32v14H2z" fill="#c8c8fa"/><path d="M2 8h32M2 13h32M12 3v14M23 3v14" stroke="#aab"/></symbol>
<symbol id="xls" viewBox="0 0 36 36"><path d="M8 1h20l7 7v27H8z" fill="#fff" stroke="#666" stroke-width="2"/><path d="M0 7h22v20H0z" fill="#4a9a4a"/><path d="M5 11l10 12M15 11L5 23" stroke="#fff" stroke-width="3"/><path d="M22 11h9v12h-9M26 11v12M22 17h9" stroke="#4a9a4a" fill="none" stroke-width="2"/><path d="M16 29h10l-5 6z" fill="#4a9a4a"/></symbol>
<symbol id="axes" viewBox="0 0 36 36"><path d="M17 21V8" stroke="#1034c4" stroke-width="3"/><path d="M12 12h10L17 5z" fill="#1034c4"/><path d="M17 21L4 28" stroke="#0a9a44" stroke-width="2.500"/><path d="M0 31l7-8 3 6z" fill="#0a9a44"/><path d="M17 21l14 2" stroke="#d83200" stroke-width="2.500"/><path d="M28 18v10l8-4z" fill="#d83200"/><circle cx="17" cy="21" r="3" fill="#f0d000"/><use href="#win"/></symbol>
<symbol id="v1" viewBox="0 0 36 36"><use href="#corner"/><use href="#cubeb" y="3"/><use href="#star"/><use href="#win"/></symbol>
<symbol id="v2" viewBox="0 0 36 36"><path d="M10 13h12v23H10z" fill="#6f93bd" stroke="#234"/><path d="M10 13l5-4h13l-6 4v23l6-4V9z" fill="#46688f" stroke="#234"/><path d="M1 18h6M4 12l6-8h24l-5 8" fill="none" stroke="#0b3a9c" stroke-width="3" stroke-dasharray="8 4"/></symbol>
<symbol id="v3" viewBox="0 0 36 36"><path d="M1 10l6-5h20v12l-6 5H1z" fill="#8fb0d4" stroke="#234" transform="translate(0 5)"/><path d="M1 15h20v12H1zM21 15l6-5" fill="#6f93bd" stroke="#234"/><path d="M24 35V12l8-10v24z" fill="none" stroke="#0b3a9c" stroke-width="3" stroke-dasharray="8 4"/></symbol>
<symbol id="v4" viewBox="0 0 36 36"><use href="#corner"/><path d="M9 12l8-10h16v12l-8 10H9z" fill="#6f93bd" stroke="#234"/><path d="M9 12h16v12M25 12l8-10" class="k" stroke-width="1"/></symbol>
<symbol id="v5" viewBox="0 0 36 36"><use href="#corner"/><path d="M11 8l6-5h12v28l-6 4H11z" fill="#9cbbe0" stroke="#234"/><use href="#star"/><use href="#win"/></symbol>
<symbol id="st1" viewBox="0 0 36 36"><path d="M4 26h22l6 9H0zM6 18h20l4 6H2z" fill="#666"/><path d="M8 14h18l4 6H4z" fill="#f4d040" stroke="#555"/><use href="#star"/><use href="#win"/><use href="#cur" x="24" y="16"/></symbol>
<symbol id="st2" viewBox="0 0 36 36"><path d="M4 26h24v9H4z" fill="none" stroke="#555" stroke-width="2" stroke-dasharray="4 2"/><path d="M6 12h20v14H6z" fill="#f4d040" stroke="#b33" stroke-dasharray="3 2"/><use href="#star"/><use href="#win"/><use href="#cur" x="24" y="16"/></symbol>
<symbol id="man" viewBox="0 0 36 36"><circle cx="14" cy="9" r="4" fill="#556"/><path d="M9 13h10l4 10-3 1-3-5 3 17h-4l-2-12-3 12H7l3-17-4 5-2-2z" fill="#667"/><use href="#star"/><use href="#win"/></symbol>
<symbol id="clip" viewBox="0 0 36 36"><path d="M2 12h33v18l-5 5H2z" fill="#fff" stroke="#555" stroke-width="2"/><use href="#star"/><path d="M9 22V5q4-6 7 0v14q-2 5-4 0V8" class="k" stroke-width="1.500"/><use href="#win"/></symbol>
<symbol id="m1" viewBox="0 0 36 36"><path d="M5 22L22 5" class="k" stroke-width="3"/><path d="M2 14l0 11 11-1zM25 12l0-10-11 2z" class="fk"/><use href="#n" x="31" y="11"/><use href="#n" x="12" y="31"/></symbol>
<symbol id="e1" viewBox="0 0 36 36"><path d="M18 4v28" class="k"/><path d="M4 4v28M32 4v28" class="g"/><use href="#n" x="18" y="4"/><use href="#n" x="18" y="32"/></symbol>
<symbol id="e2" viewBox="0 0 36 36"><path d="M18 4v28" class="k"/><path d="M4 2l7 31M32 2l-7 31" class="g"/><use href="#n" x="18" y="4"/><use href="#n" x="18" y="32"/></symbol>
<symbol id="e3" viewBox="0 0 36 36"><path d="M4 3l30 9" class="g"/><path d="M27 9L4 32" class="k" stroke-width="3" stroke-dasharray="3 4"/><use href="#n" x="25" y="10"/><use href="#n" x="4" y="32"/></symbol>
<symbol id="e4" viewBox="0 0 36 36"><path d="M6 35V25L24 6h10" class="k" stroke-width="2.500"/><use href="#n" x="6" y="24"/><use href="#n" x="25" y="6"/></symbol>
<symbol id="e5" viewBox="0 0 36 36"><path d="M6 35V25Q6 6 24 6h10" class="k" stroke-width="2.500"/><use href="#n" x="6" y="24"/><use href="#n" x="25" y="6"/></symbol>
<symbol id="e6" viewBox="0 0 36 36"><path d="M4 24L22 4M12 35l22-24" class="k" stroke-width="2.500"/><path d="M11 8v16M16 12v18M21 16v18" class="lg"/><use href="#n" x="4" y="24"/><use href="#n" x="22" y="4"/></symbol>
<symbol id="e7" viewBox="0 0 36 36"><path d="M4 32L30 4M8 19l12 12M16 10l12 12" class="k" stroke-width="2.500"/><use href="#n" x="4" y="32"/><use href="#n" x="31" y="4"/></symbol>
<symbol id="e8" viewBox="0 0 36 36"><path d="M4 32L30 4M5 21l9-11M16 8l12 12" class="k" stroke-width="2.500"/><path d="M9 8l8-2-3 9z" class="fk"/><use href="#n" x="4" y="32"/><use href="#n" x="31" y="4"/></symbol>
<symbol id="e9" viewBox="0 0 36 36"><path d="M4 14l10-7 8 8 10-10M4 32l10-7 8 8 10-11M6 18v8M31 10v9" class="lg"/><use href="#gn" x="4" y="14"/><use href="#gn" x="14" y="7"/><use href="#gn" x="22" y="15"/><use href="#gn" x="32" y="5"/><use href="#gn" x="4" y="31"/><use href="#gn" x="14" y="25"/><use href="#gn" x="22" y="33"/><use href="#gn" x="32" y="22"/></symbol>
<symbol id="e10" viewBox="0 0 36 36"><path d="M13 3l18 22" class="g"/><path d="M22 14L4 32" class="k" stroke-width="3" stroke-dasharray="3 4"/><use href="#n" x="22" y="14"/><use href="#n" x="4" y="32"/></symbol>
<symbol id="f1" viewBox="0 0 36 36"><path d="M12 32L30 13" stroke="#9ab8e8" stroke-width="6" stroke-dasharray="7 4"/><path d="M5 22L19 6M1 20l7 7M18 2l7 7" class="k" stroke-width="2.500"/><use href="#n" x="12" y="32"/><use href="#n" x="30" y="13"/><path d="M24 24h12M24 35h12M30 24v11" class="g" stroke-width="2.500"/></symbol>
<symbol id="f2" viewBox="0 0 36 36"><path d="M4 24L22 4M14 34l20-20" stroke="#a9c0dc" stroke-width="6"/><path d="M11 8v16M16 12v18M21 16v18" class="g"/><use href="#n" x="4" y="24"/><use href="#n" x="22" y="4"/></symbol>
<symbol id="f3" viewBox="0 0 36 36"><path d="M4 32L30 4" stroke="#a9c0dc" stroke-width="7"/><path d="M8 19l12 12M16 10l12 12" class="k" stroke-width="2.500"/><use href="#n" x="4" y="32"/><use href="#n" x="31" y="4"/></symbol>
<symbol id="f4" viewBox="0 0 36 36"><path d="M4 32L30 4" stroke="#a9c0dc" stroke-width="7"/><path d="M5 21l9-11M16 8l12 12" class="k" stroke-width="2.500"/><path d="M9 8l8-2-3 9z" class="fk"/><use href="#n" x="4" y="32"/><use href="#n" x="31" y="4"/></symbol>
<symbol id="g1" viewBox="0 0 36 36"><path d="M1 4h32v31H1z" fill="url(#dots)"/><use href="#eye"/></symbol>
<symbol id="g2" viewBox="0 0 36 36"><path d="M1 6h32v30H1z" fill="url(#fine)"/><use href="#star"/><use href="#win"/></symbol>
<symbol id="g3" viewBox="0 0 36 36"><path d="M1 6h32v30H1z" fill="url(#fine)"/><use href="#eye"/></symbol>
<symbol id="g4" viewBox="0 0 36 36"><path d="M6 2v34M30 2v34M1 6h34M1 31h34" class="k" stroke-dasharray="2 3"/><use href="#star"/></symbol>
<symbol id="g5" viewBox="0 0 36 36"><path d="M6 2v34M30 2v34M1 6h34M1 31h34" class="k" stroke-dasharray="2 3"/><use href="#eye"/></symbol>
<symbol id="g6" viewBox="0 0 36 36"><path d="M5 2v30h28" class="g" stroke-width="2.500"/><path d="M5 20h13v12" class="lg"/></symbol>
<symbol id="h1" viewBox="0 0 36 36"><path d="M1 4h32v31H1z" fill="url(#dots)"/><path d="M17 14V8q8-10 15 0v6" fill="none" stroke="#8c8ca4" stroke-width="6"/><path d="M14 13h7v6h-7z" fill="#d83000"/><path d="M28 13h7v6h-7z" fill="#1034c4"/></symbol>
<symbol id="h2" viewBox="0 0 36 36"><path d="M9 28V14q9-12 18 0v14" fill="none" stroke="#8c8ca4" stroke-width="8"/><path d="M5 26h8v7H5z" fill="#d83000"/><path d="M23 26h8v7h-8z" fill="#1034c4"/></symbol>
<symbol id="h3" viewBox="0 0 36 36"><path d="M8 9h19v19H8z" class="g" stroke-width="2.500"/></symbol>
<symbol id="h4" viewBox="0 0 36 36"><circle cx="18" cy="18" r="12" class="g"/><path d="M7 7l22 22M29 7L7 29" class="g"/></symbol>
<symbol id="h5" viewBox="0 0 36 36"><path d="M8 8h20v20H8zM8 8l20 20M28 8L8 28" class="g" stroke-width="2.500"/></symbol>
<symbol id="h6" viewBox="0 0 36 36"><path d="M10 6v23h20M10 19h10v10" class="g" stroke-width="2.500"/></symbol>
<symbol id="h7" viewBox="0 0 36 36"><path d="M5 30l13-13" class="g" stroke-width="2.500"/><path d="M18 17L29 6" class="g" stroke-dasharray="3 3"/><path d="M14 15l8 4" class="g"/></symbol>
<symbol id="h8" viewBox="0 0 36 36"><path d="M7 26L22 8M14 29L29 11" class="g" stroke-width="2.500"/></symbol>
<symbol id="h9" viewBox="0 0 36 36"><circle cx="18" cy="19" r="10" class="g" stroke-width="2.500"/><path d="M6 9h24" class="g" stroke-width="2.500"/></symbol>
<symbol id="h10" viewBox="0 0 36 36"><circle cx="18" cy="18" r="12" class="g" stroke-width="2.500"/><path d="M18 8l7 10-7 10-7-10z" class="g"/></symbol>
<symbol id="h11" viewBox="0 0 36 36"><path d="M9 29L29 7M8 18l12 8M15 11l12 8M10 24l14-14" class="g"/></symbol>
<symbol id="h12" viewBox="0 0 36 36"><path d="M9 29L29 7M16 14l12 8" class="g"/><path d="M8 10l10 1-4 9z" class="fg"/></symbol>
<symbol id="h13" viewBox="0 0 36 36"><path d="M9 29L29 7M16 14l12 8" class="g"/><path d="M6 10h8M8 18h8" class="g" stroke-dasharray="2 3"/></symbol>
<symbol id="h14" viewBox="0 0 36 36"><path d="M20 6l-3 8 5 6-8 4 10 6M8 16l3 9M29 9l-1 12" class="g" stroke-dasharray="2 5"/></symbol>
<symbol id="h15" viewBox="0 0 36 36"><path d="M3 5h30v26H3z" fill="url(#fine)"/></symbol>
<symbol id="h16" viewBox="0 0 36 36"><path d="M8 3v30M28 3v30M3 8h30M3 29h30" class="k" stroke-dasharray="2 3"/></symbol>
<symbol id="h17" viewBox="0 0 36 36"><path d="M12 9h17l-5 8H7zM7 22h18l4-9M6 27h18l5-9" class="g"/></symbol>
<symbol id="h18" viewBox="0 0 36 36"><path d="M9 14h18v8H9z" class="fg"/><path d="M7 11v4M29 11v4M7 21v4M29 21v4" stroke="#e00" stroke-width="2"/></symbol>
<symbol id="h19" viewBox="0 0 36 36"><path d="M18 5v9M14 20h8v11h-8z" class="g" stroke-width="2.500"/><path d="M13 12h10l-5 6z" class="fg"/></symbol>
<symbol id="chev" viewBox="0 0 36 36"><path d="M6 12l12 12 12-12" fill="none" stroke="#555" stroke-width="3.500"/></symbol>
<symbol id="searchi" viewBox="0 0 36 36"><path d="M1 7h13M1 19h13M1 32h32" stroke="#888" stroke-width="3"/><circle cx="23" cy="11" r="8" fill="none" stroke="#888" stroke-width="3"/><path d="M28 17l7 8" stroke="#888" stroke-width="4"/></symbol>
<symbol id="min" viewBox="0 0 36 36"><path d="M6 18h24" stroke="#111" stroke-width="2.500"/></symbol>
<symbol id="max" viewBox="0 0 36 36"><rect x="8" y="11" width="17" height="16" rx="3" fill="none" stroke="#111" stroke-width="2.500"/><path d="M12 7h12q5 0 5 5v11" fill="none" stroke="#111" stroke-width="2.500"/></symbol>
<symbol id="cls" viewBox="0 0 36 36"><path d="M7 7l22 22M29 7L7 29" stroke="#111" stroke-width="2.500"/></symbol>
<symbol id="rst" viewBox="0 0 36 36"><path d="M13 6h17v13H13z" fill="none" stroke="#333" stroke-width="3"/><path d="M13 5h17v4H13z" fill="#333"/><path d="M6 16h17v13H6z" fill="#f2f5fa" stroke="#333" stroke-width="3"/><path d="M6 15h17v4H6z" fill="#333"/></symbol>
<symbol id="bx" viewBox="0 0 36 36"><path d="M8 8l20 20M28 8L8 28" stroke="#333" stroke-width="5"/></symbol>
<symbol id="bmin" viewBox="0 0 36 36"><path d="M8 26h20" stroke="#333" stroke-width="6"/></symbol>
</svg>

<header class="titlebar">
  <svg class="ic"><use href="#applogo"/></svg>
  <h1>Dlubal RFEM | 6.06.0011 | 2421.rf6 | Test</h1>
  <div class="wbtns"><button aria-label="Minimieren"><svg class="i30"><use href="#min"/></svg></button><button aria-label="Wiederherstellen"><svg class="i30"><use href="#max"/></svg></button><button aria-label="Schließen"><svg class="i30"><use href="#cls"/></svg></button></div>
</header>

<nav class="menubar">
  <svg class="ic"><use href="#logo"/></svg>
  <a href="#">Datei</a><a href="#">Bearbeiten</a><a href="#">Ansicht</a><a href="#">Einfügen</a><a href="#">Zuordnen</a><a href="#">Berechnen</a><a href="#">Ergebnisse</a><a href="#">Extras</a><a href="#">Optionen</a><a href="#">Fenster</a><a href="#">CAD-BIM</a><a href="#">Hilfe</a>
  <div class="menuright">
    <i class="tri"></i>
    <input class="search" type="text" aria-label="Schlüsselwort" placeholder="Geben Sie ein Schlüsselwort ein (Alt+Q)">
    <svg class="i32"><use href="#searchi"/></svg>
    <span class="lic">Online License 37 | Frank Faulstich | Dlubal Software GmbH</span>
    <button aria-label="Fenster minimieren"><svg class="i22"><use href="#bmin"/></svg></button><button aria-label="Fenster verkleinern"><svg class="i26"><use href="#rst"/></svg></button><button aria-label="Fenster schließen"><svg class="i22"><use href="#bx"/></svg></button>
  </div>
</nav>

<div class="bar">
<i class="grip"></i>
<button class="tb" aria-label="Neu"><svg class="ic"><use href="#new"/></svg></button><button class="tb" aria-label="Öffnen"><svg class="ic"><use href="#open"/></svg></button><button class="tb" aria-label="Center"><svg class="ic"><use href="#cc"/></svg></button><button class="tb" aria-label="Blöcke"><svg class="ic"><use href="#cube3"/></svg></button><button class="tb" aria-label="Basisangaben"><svg class="ic"><use href="#hand"/></svg></button><button class="tb" aria-label="Speichern"><svg class="ic"><use href="#save"/></svg></button><button class="tb" aria-label="Drucken"><svg class="ic"><use href="#print"/></svg></button><button class="dd" aria-label="Druckoptionen"></button><button class="tb" aria-label="Neues Protokoll"><svg class="ic"><use href="#sdoc"/></svg></button><button class="tb" aria-label="Protokoll"><svg class="ic"><use href="#doc"/></svg></button><i class="sep"></i>
<button class="tb" aria-label="Rückgängig"><svg class="ic"><use href="#undo"/></svg></button><button class="dd" aria-label="Verlauf"></button><button class="tb" aria-label="Wiederherstellen"><svg class="ic"><use href="#redo"/></svg></button><button class="dd off" aria-label="Verlauf vorwärts"></button><i class="sep"></i>
<button class="tb on" aria-label="Navigator"><svg class="ic"><use href="#list"/></svg></button><button class="tb on" aria-label="Tabellen"><svg class="ic"><use href="#grid"/></svg></button><button class="tb" aria-label="Bericht"><svg class="ic"><use href="#report"/></svg></button><button class="tb" aria-label="Konsole"><svg class="ic"><use href="#cons"/></svg></button><button class="tb" aria-label="Skript"><svg class="ic" viewBox="0 0 36 36"><path d="M8 1h20v18H8z" fill="#eee" stroke="#666" stroke-width="2"/><path d="M13 1h15v5H13z" fill="#3445e0"/><rect y="16" width="36" height="20" rx="5" fill="#c8c8c8"/><text x="2" y="32" class="ti b t15">&gt;SC</text></svg></button><button class="tb" aria-label="Panel"><svg class="ic"><use href="#panel"/></svg></button><i class="brk"></i>
<button class="tb" aria-label="Auswahl"><svg class="ic"><use href="#poly"/></svg></button><button class="dd" aria-label="Auswahlart"></button><button class="tb" aria-label="Sonderauswahl"><svg class="ic"><use href="#pm"/></svg></button><i class="brk"></i>
<button class="tb" aria-label="Neuer Lastfall"><svg class="ic"><use href="#sload"/></svg></button><button class="tb" aria-label="Lastfälle"><svg class="ic"><use href="#load"/></svg></button>
<div class="combo lf"><i class="sw"></i><i class="sw"></i><b class="gbox">G</b><select aria-label="Lastfall"><option>LF1&nbsp;&nbsp; Eigengewicht</option></select><svg class="i18"><use href="#chev"/></svg></div><button class="step l" aria-label="Vorheriger"></button><button class="step r" aria-label="Nächster"></button>
<button class="tb" aria-label="Filter löschen"><svg class="ic"><use href="#filx"/></svg></button><button class="dd" aria-label="Filter"></button><button class="tb" aria-label="Verformung"><svg class="ic"><use href="#eyed"/></svg></button><button class="tb" aria-label="Ergebniswerte"><svg class="ic" viewBox="0 0 36 36"><text x="1" y="12" class="ti tg b t17">x.xx</text><path d="M13 15q0 14 9 19M22 15v19" class="lg" stroke-width="3" stroke-dasharray="5 2"/></svg></button><button class="tb" aria-label="Lasten zeigen"><svg class="ic"><use href="#eyel"/></svg></button><button class="tb" aria-label="Lastwerte"><svg class="ic" viewBox="0 0 36 36"><text x="1" y="11" class="ti tg b t17">x.xx</text><path d="M7 13h4v10h4l-6 8-6-8h4z" class="flg"/><path d="M0 33h36v3H0z" class="fg"/></svg></button><button class="tb" aria-label="Imperfektionen"><svg class="ic"><use href="#geyeb"/></svg></button><button class="tb" aria-label="Netz"><svg class="ic"><use href="#mesh"/></svg></button><button class="dd" aria-label="Netzoptionen"></button><button class="tb" aria-label="Ergebnisse zeigen"><svg class="ic"><use href="#res"/></svg></button><button class="tb" aria-label="Werte zeigen"><svg class="ic" viewBox="0 0 36 36"><text x="1" y="12" class="ti tg b t17">x.xx</text><path d="M0 23h22L0 33z" class="flg"/><path d="M14 23L35 14v9z" class="fg"/><path d="M0 23h36" class="g"/></svg></button><i class="sep"></i><button class="tb" aria-label="Berechnung"><svg class="ic"><use href="#calc"/></svg></button><button class="tb" aria-label="Cloud"><svg class="ic"><use href="#cloud"/></svg></button><button class="dd" aria-label="Cloudoptionen"></button><i class="brk"></i>
<button class="tb" aria-label="Zoom zurück"><svg class="ic"><use href="#magx"/></svg></button><button class="tb" aria-label="Isometrie"><svg class="ic"><use href="#wbox"/></svg></button><button class="tb" aria-label="Ansicht bearbeiten"><svg class="ic"><use href="#pbox"/></svg></button><button class="tb" aria-label="Perspektive"><svg class="ic"><use href="#persp"/></svg></button><i class="sep"></i><button class="tb" aria-label="In X"><svg class="ic" viewBox="0 0 36 36"><path d="M6 8v20" stroke="#1034c4" stroke-width="2.500"/><path d="M1 25h10L6 35z" fill="#1034c4"/><path d="M8 6h18" stroke="#0a9a44" stroke-width="2.500"/><path d="M25 0v12l10-6z" fill="#0a9a44"/><circle cx="6" cy="6" r="4.500" fill="#ffe000" stroke="#c83200" stroke-width="2"/><text x="20" y="32" class="ti b t19">X</text></svg></button><button class="tb" aria-label="Gegen Y"><svg class="ic" viewBox="0 0 36 36"><path d="M6 8v20" stroke="#1034c4" stroke-width="2.500"/><path d="M1 25h10L6 35z" fill="#1034c4"/><path d="M8 6h18" stroke="#c83200" stroke-width="2.500"/><path d="M25 0v12l10-6z" fill="#c83200"/><circle cx="6" cy="6" r="5.500" fill="#0a9a44"/><text x="17" y="32" class="ti b t19">-Y</text></svg></button><button class="tb" aria-label="In Z"><svg class="ic" viewBox="0 0 36 36"><path d="M6 8v20" stroke="#0a9a44" stroke-width="2.500"/><path d="M1 25h10L6 35z" fill="#0a9a44"/><path d="M8 6h18" stroke="#c83200" stroke-width="2.500"/><path d="M25 0v12l10-6z" fill="#c83200"/><circle cx="6" cy="6" r="4.500" fill="#ffe000" stroke="#1034c4" stroke-width="2"/><text x="20" y="32" class="ti b t19">Z</text></svg></button><button class="tb" aria-label="Gegen X"><svg class="ic" viewBox="0 0 36 36"><path d="M30 8v20" stroke="#1034c4" stroke-width="2.500"/><path d="M25 25h10l-5 10z" fill="#1034c4"/><path d="M28 6H10" stroke="#0a9a44" stroke-width="2.500"/><path d="M11 0v12L1 6z" fill="#0a9a44"/><circle cx="30" cy="6" r="5.500" fill="#c83200"/><text x="0" y="32" class="ti b t19">-X</text></svg></button><button class="dd" aria-label="Ansichten"></button><button class="tb" aria-label="Sichtbarkeit"><svg class="ic"><use href="#micro"/></svg></button><button class="dd" aria-label="Sichtbarkeiten"></button><i class="sep"></i><button class="tb" aria-label="Darstellung"><svg class="ic"><use href="#chair"/></svg></button><button class="dd" aria-label="Darstellungsart"><svg class="pointer" viewBox="0 0 26 40"><path d="M1 1v32l8-7 7 12 3-2-6-12h11z" fill="#fff" stroke="#111" stroke-width="1.500"/></svg></button><button class="tb" aria-label="Fläche"><svg class="ic"><use href="#plane"/></svg></button><button class="dd" aria-label="Flächenoptionen"></button><span class="more">»</span>
</div>

<div class="bar">
<i class="grip"></i>
<button class="tb" aria-label="Knoten"><svg class="ic"><use href="#snode"/></svg></button><button class="dd" aria-label="Knotenart"></button><button class="tb" aria-label="Linie"><svg class="ic"><use href="#sline"/></svg></button><button class="tb" aria-label="Stab"><svg class="ic"><use href="#smem"/></svg></button><button class="dd" aria-label="Stabart"></button><button class="tb" aria-label="Polylinie"><svg class="ic"><use href="#spoly"/></svg></button><button class="dd" aria-label="Linienart"></button><i class="sep"></i>
<button class="tb" aria-label="Knotenlager"><svg class="ic"><use href="#ssup"/></svg></button><button class="tb" aria-label="Linienlager"><svg class="ic"><use href="#slsup"/></svg></button><button class="tb" aria-label="Flächenlager"><svg class="ic"><use href="#sssup"/></svg></button><i class="sep"></i>
<button class="tb" aria-label="Rechteckfläche"><svg class="ic"><use href="#srect"/></svg></button><button class="dd" aria-label="Flächenart"></button><button class="tb" aria-label="Gekrümmte Fläche"><svg class="ic"><use href="#scurv"/></svg></button><button class="dd" aria-label="Krümmungsart"></button><button class="tb" aria-label="Öffnung"><svg class="ic"><use href="#sopen"/></svg></button><button class="dd" aria-label="Öffnungsart"></button><button class="tb" aria-label="Faltfläche"><svg class="ic"><use href="#sfold"/></svg></button><button class="dd" aria-label="Faltart"></button><button class="tb" aria-label="Volumen"><svg class="ic"><use href="#ssol"/></svg></button><i class="sep"></i>
<button class="tb" aria-label="Stabsatz"><svg class="ic"><use href="#gmem"/></svg></button><button class="dd off" aria-label="Stabsatzart"></button><i class="sep"></i>
<button class="tb" aria-label="Knotenlast"><svg class="ic"><use href="#lnode"/></svg></button><button class="tb" aria-label="Linienlast"><svg class="ic"><use href="#lline"/></svg></button><button class="tb" aria-label="Stablast"><svg class="ic"><use href="#lmem"/></svg></button><button class="tb" aria-label="Flächenlast"><svg class="ic"><use href="#lsurf"/></svg></button><button class="tb" aria-label="Imperfektion"><svg class="ic"><use href="#gimp"/></svg></button><button class="dd off" aria-label="Imperfektionsart"></button><button class="tb" aria-label="Freie Last"><svg class="ic"><use href="#sfree"/></svg></button><button class="dd" aria-label="Freie Lasten"></button><i class="brk"></i>
<div class="results">
<button class="tb" aria-label="Filter"><svg class="ic"><use href="#fil"/></svg></button><i class="sep"></i><button class="tb" aria-label="Diagramm"><svg class="ic"><use href="#diag"/></svg></button><button class="tb" aria-label="Verformte Struktur"><svg class="ic"><use href="#frame"/></svg></button><button class="tb" aria-label="Animation"><svg class="ic"><use href="#film"/></svg></button><i class="sep"></i><button class="tb" aria-label="Schnittgrößen"><svg class="ic"><use href="#para"/></svg></button><button class="tb" aria-label="Flächenergebnisse"><svg class="ic"><use href="#fan"/></svg></button><button class="tb" aria-label="Volumenergebnisse"><svg class="ic"><use href="#die"/></svg></button><button class="tb" aria-label="Lagerreaktionen"><svg class="ic"><use href="#reac"/></svg></button><button class="tb" aria-label="Schnitt"><svg class="ic"><use href="#wedge"/></svg></button><i class="sep"></i>
<button class="tb" aria-label="Linienverlauf"><svg class="ic"><use href="#w1"/></svg></button><button class="tb" aria-label="Stabverlauf"><svg class="ic"><use href="#w2"/></svg></button><button class="tb" aria-label="Stabsatzverlauf"><svg class="ic"><use href="#w3"/></svg></button><button class="tb" aria-label="Lagerverlauf"><svg class="ic"><use href="#w4"/></svg></button><button class="tb" aria-label="Schnittverlauf"><svg class="ic"><use href="#w5"/></svg></button><button class="tb" aria-label="Neuer Schnitt"><svg class="ic"><use href="#sres"/></svg></button><button class="tb" aria-label="Ergebnispunkt"><svg class="ic"><use href="#pin"/></svg></button><i class="sep"></i><button class="tb" aria-label="Glättung"><svg class="ic"><use href="#gpen"/></svg></button><button class="dd off" aria-label="Glättungsart"></button><i class="brk"></i>
<button class="tb" aria-label="Rastereinstellung"><svg class="ic"><use href="#gridwin"/></svg></button><button class="tb" aria-label="Rasterursprung"><svg class="ic"><use href="#gridc"/></svg></button><button class="tb on" aria-label="Ebene XY"><svg class="ic"><use href="#pl1"/></svg></button><button class="tb" aria-label="Ebene YZ"><svg class="ic"><use href="#pl2"/></svg></button><button class="tb" aria-label="Ebene XZ"><svg class="ic"><use href="#pl3"/></svg></button><i class="sep"></i>
<button class="tb" aria-label="Kopieren"><svg class="ic"><use href="#chain"/></svg></button><button class="tb" aria-label="Drehen"><svg class="ic"><use href="#rot"/></svg></button><button class="tb" aria-label="Spiegeln"><svg class="ic"><use href="#mirr"/></svg></button><button class="tb" aria-label="Verbinden"><svg class="ic"><use href="#xconn"/></svg></button><button class="tb" aria-label="Einstellungen"><svg class="ic"><use href="#gear"/></svg></button>
</div>
</div>

<main class="main">
<aside class="navi">
  <div class="phead"><h2>Navigator - Daten</h2><button aria-label="Lösen"><svg class="i26"><use href="#rst"/></svg></button><button aria-label="Schließen"><svg class="i22"><use href="#bx"/></svg></button></div>
  <div class="treewrap">
  <ul class="tree">
    <li class="l0"><svg class="i32"><use href="#logo"/></svg>RFEM</li>
    <li class="l1"><i class="tw o"></i><span class="lab"><svg class="i32"><use href="#file"/></svg><b>2421.rf6 | Test</b></span></li>
    <li class="l2"><i class="tw o"></i><span class="lab"><svg class="i32"><use href="#foldo"/></svg>Basisobjekte</span></li>
    <li class="l3"><i class="tw c"></i><span class="lab"><svg class="i32"><use href="#mat"/></svg>Materialien</span></li>
    <li class="l3"><i class="tw c"></i><span class="lab"><svg class="i32"><use href="#cs"/></svg>Querschnitte</span></li>
    <li class="l3"><i class="tw c"></i><span class="lab"><svg class="i32"><use href="#thick"/></svg>Dicken</span></li>
    <li class="l3"><i class="tw c"></i><span class="lab"><svg class="i32"><use href="#node"/></svg>Knoten</span></li>
    <li class="l3"><i class="tw c"></i><span class="lab"><svg class="i32"><use href="#line"/></svg>Linien</span></li>
    <li class="l3"><i class="tw"></i><span class="lab"><svg class="i32"><use href="#mem"/></svg>Stäbe</span></li>
    <li class="l3"><i class="tw c"></i><span class="lab"><svg class="i32"><use href="#surf"/></svg>Flächen</span></li>
    <li class="l3"><i class="tw"></i><span class="lab"><svg class="i32"><use href="#hole"/></svg>Öffnungen</span></li>
    <li class="l3"><i class="tw c"></i><span class="lab sel"><svg class="i32"><use href="#vol"/></svg>Volumenkörper</span></li>
    <li class="l3"><i class="tw"></i><span class="lab"><svg class="i32"><use href="#lset"/></svg>Liniensätze</span></li>
    <li class="l3"><i class="tw"></i><span class="lab"><svg class="i32"><use href="#mset"/></svg>Stabsätze</span></li>
    <li class="l3"><i class="tw"></i><span class="lab"><svg class="i32"><use href="#sset"/></svg>Flächensätze</span></li>
    <li class="l3"><i class="tw"></i><span class="lab"><svg class="i32"><use href="#vset"/></svg>Volumensätze</span></li>
    <li class="l2"><i class="tw c"></i><span class="lab"><svg class="i32"><use href="#folder"/></svg>Spezielle Objekte</span></li>
    <li class="l2"><i class="tw c"></i><span class="lab"><svg class="i32"><use href="#folder"/></svg>Typen für Knoten</span></li>
    <li class="l2"><i class="tw c"></i><span class="lab"><svg class="i32"><use href="#folder"/></svg>Typen für Linien</span></li>
    <li class="l2"><i class="tw c"></i><span class="lab"><svg class="i32"><use href="#folder"/></svg>Typen für Stäbe</span></li>
    <li class="l2"><i class="tw c"></i><span class="lab"><svg class="i32"><use href="#folder"/></svg>Typen für Flächen</span></li>
    <li class="l2"><i class="tw c"></i><span class="lab"><svg class="i32"><use href="#folder"/></svg>Typen für Volumenkörper</span></li>
    <li class="l2"><i class="tw c"></i><span class="lab"><svg class="i32"><use href="#folder"/></svg>Typen für spezielle Objekte</span></li>
    <li class="l2"><i class="tw c"></i><span class="lab"><svg class="i32"><use href="#folder"/></svg>Imperfektionen</span></li>
    <li class="l2"><i class="tw o"></i><span class="lab"><svg class="i32"><use href="#foldo"/></svg>Lastfälle und Kombinationen</span></li>
    <li class="l3"><i class="tw c"></i><span class="lab"><svg class="i32"><use href="#nload"/></svg>Lastfälle</span></li>
    <li class="l3"><i class="tw c"></i><span class="lab"><svg class="i32"><use href="#act"/></svg>Einwirkungen</span></li>
    <li class="l3"><i class="tw c"></i><span class="lab"><svg class="i32"><use href="#situ"/></svg>Bemessungssituationen</span></li>
    <li class="l3"><i class="tw"></i><span class="lab"><svg class="i32"><use href="#acomb"/></svg>Einwirkungskombinationen</span></li>
    <li class="l3"><i class="tw"></i><span class="lab"><svg class="i32"><use href="#lcomb"/></svg>Lastkombinationen</span></li>
    <li class="l3"><i class="tw c"></i><span class="lab"><svg class="i32"><use href="#stat"/></svg>Statikanalyse-Einstellungen</span></li>
    <li class="l3"><i class="tw c"></i><span class="lab"><svg class="i16"><use href="#wiz"/></svg>Kombinationsassistenten</span></li>
    <li class="l3"><i class="tw"></i><span class="lab"><svg class="i32"><use href="#rel"/></svg>Lastfallbeziehung</span></li>
    <li class="l2"><i class="tw c"></i><span class="lab"><svg class="i32"><use href="#folder"/></svg>Lastassistenten</span></li>
    <li class="l2"><i class="tw o"></i><span class="lab"><svg class="i32"><use href="#foldo"/></svg>Lasten</span></li>
    <li class="l3"><i class="tw c"></i><span class="lab"><svg class="i32"><use href="#folder"/></svg>LF1 - Eigengewicht</span></li>
    <li class="l2"><i class="tw"></i><span class="lab"><svg class="i32"><use href="#ndiag"/></svg>Berechnungsdiagramme</span></li>
    <li class="l2"><i class="tw c"></i><span class="lab"><svg class="i32"><use href="#folder"/></svg>Ergebnisse</span></li>
    <li class="l2"><i class="tw c"></i><span class="lab"><svg class="i32"><use href="#folder"/></svg>Hilfsobjekte</span></li>
    <li class="l2"><i class="tw"></i><span class="lab"><svg class="i32"><use href="#folder"/></svg>Ausdruckprotokolle</span></li>
  </ul>
  <div class="vscroll nsc"><i></i></div>
  </div>
  <div class="ntabs"><button class="cur" aria-label="Daten"><svg class="i32"><use href="#nav1"/></svg></button><button aria-label="Zeigen"><svg class="i32"><use href="#nav2"/></svg></button><button aria-label="Ansichten"><svg class="i32"><use href="#nav3"/></svg></button></div>
</aside>

<section class="work">
  <svg class="view" viewBox="580 210 2448 930" preserveAspectRatio="xMidYMid meet" role="img" aria-label="Modell">
    <defs>
      <g id="plate"><path d="M1459 270L1180 395L2147 541L2426 414z" fill="#8aa2ff" fill-opacity=".11"/></g>
      <g id="pedge" fill="none"><path d="M1180 395L1459 270L2426 414" stroke="#606078" stroke-width="1"/><path d="M1180 395L2147 541L2426 414" stroke="#55555f" stroke-width="1.300"/><path d="M1474 283L1232 392L2132 527L2373 417z" stroke="#9a9ab0" stroke-dasharray="10 5"/></g>
      <g id="layer" fill="none" stroke="#9a9ab0" stroke-dasharray="10 5"><path d="M1187 403L2140 547V588L1187 443z"/><path d="M1466 279L2419 422V462L1466 319z"/><path d="M1452 280L1187 399V442L1452 324z"/><path d="M2419 424L2154 544V587L2419 467z"/></g>
      <path id="rd" d="M-2-4h5v7h-5z" fill="#f50000"/>
      <g id="corners"><use href="#rd" x="1180" y="395"/><use href="#rd" x="2147" y="541"/><use href="#rd" x="2426" y="414"/></g>
      <path id="bs" d="M1798 428h9v9h-9z" fill="#1ba1ff"/>
    </defs>
    <path d="M1459 270L1180 395V935L2147 1081L2426 954V414z" fill="#f1f3ff"/>
    <path d="M1459 270L1180 395V935L1459 810z" fill="#7780d0" fill-opacity=".06"/>
    <path d="M2147 541L2426 414V954L2147 1081z" fill="#e6f4fb" fill-opacity=".5"/>
    <use href="#plate"/><use href="#plate" y="54"/><use href="#plate" y="108"/><use href="#plate" y="162"/><use href="#plate" y="216"/><use href="#plate" y="270"/><use href="#plate" y="324"/><use href="#plate" y="378"/><use href="#plate" y="432"/><use href="#plate" y="486"/><use href="#plate" y="540"/>
    <use href="#layer"/><use href="#layer" y="54"/><use href="#layer" y="108"/><use href="#layer" y="162"/><use href="#layer" y="216"/><use href="#layer" y="270"/><use href="#layer" y="324"/><use href="#layer" y="378"/><use href="#layer" y="432"/><use href="#layer" y="486"/>
    <use href="#pedge"/><use href="#pedge" y="54"/><use href="#pedge" y="108"/><use href="#pedge" y="162"/><use href="#pedge" y="216"/><use href="#pedge" y="270"/><use href="#pedge" y="324"/><use href="#pedge" y="378"/><use href="#pedge" y="432"/><use href="#pedge" y="486"/><use href="#pedge" y="540"/>
    <path d="M1459 270V810M1180 395V935M2147 541V1081M2426 414V954" stroke="#66667a" fill="none"/>
    <path d="M1459 378L1180 503L2147 649L2426 522zM1459 432L1180 557L2147 703L2426 576zM1459 378v54M1180 503v54M2147 649v54M2426 522v54" fill="none" stroke="#eba20a" stroke-width="2"/>
    <use href="#corners"/><use href="#corners" y="54"/><use href="#corners" y="108"/><use href="#corners" y="162"/><use href="#corners" y="216"/><use href="#corners" y="270"/><use href="#corners" y="324"/><use href="#corners" y="378"/><use href="#corners" y="432"/><use href="#corners" y="486"/><use href="#corners" y="540"/>
    <g opacity=".75"><use href="#rd" x="1459" y="324"/><use href="#rd" x="1459" y="378"/><use href="#rd" x="1459" y="432"/><use href="#rd" x="1459" y="486"/><use href="#rd" x="1459" y="540"/><use href="#rd" x="1459" y="594"/><use href="#rd" x="1459" y="648"/><use href="#rd" x="1459" y="702"/><use href="#rd" x="1459" y="756"/><use href="#rd" x="1459" y="810"/></g>
    <use href="#bs"/><use href="#bs" y="54"/><use href="#bs" y="162"/><use href="#bs" y="216"/><use href="#bs" y="270"/><use href="#bs" y="324"/><use href="#bs" y="378"/><use href="#bs" y="432"/><use href="#bs" y="486"/>
    <path d="M1798 536h9v9h-9z" fill="#ff5500"/><path d="M1830 513L1812 532" stroke="#ff5500" stroke-width="6"/><path d="M1804 540l4-16 12 10z" fill="#ff5500"/>
    <g id="triad"><path d="M645 1074V1104" stroke="#00007c" stroke-width="2"/><path d="M640 1101h10l-5 12z" fill="#00007c"/><path d="M645 1074l-12 5" stroke="#0e0" stroke-width="3"/><path d="M624 1083l8-8 4 8z" fill="#0e0"/><path d="M645 1074l24 4" stroke="#e00" stroke-width="2.500"/><path d="M668 1072l12 7-13 4z" fill="#e00"/><circle cx="645" cy="1074" r="4" fill="#f4f000"/></g>
    <text x="681" y="1089" class="ax" fill="#f00">X</text><text x="612" y="1093" class="ax" fill="#0c0">Y</text><text x="639" y="1131" class="ax" fill="#00007c">Z</text>
    <use href="#triad" x="814" y="-804"/>
    <text x="1495" y="284" class="ax" fill="#f00">X</text><text x="1427" y="289" class="ax" fill="#0c0">Y</text><text x="1453" y="325" class="ax" fill="#00007c">Z</text>
    <g stroke="#777172" stroke-width="2" stroke-linejoin="round">
      <path d="M2803 285L2870 255L2986 272L2919 303z" fill="#858585"/><path d="M2803 285L2919 303V431L2803 414z" fill="#cbcbcb"/><path d="M2919 303L2986 272V401L2919 431z" fill="#a4a4a4"/>
      <path d="M2832 289v130M2890 298v128M2803 318l116 17l67-30M2803 382l116 17l67-29M2936 295v129M2970 280v129M2832 289l67-30M2890 298l67-30M2820 277l117 18M2853 262l117 18" fill="none"/>
    </g>
    <text x="2849" y="369" class="cubet" fill="#2fd02f">-Y</text><text x="2942" y="361" class="cubet" fill="#f03a3a">-X</text><text x="2887" y="285" class="cubez" fill="#2c2c8c">+Z</text>
    <path d="M2707 289h2v2h-2zM1383 593h1v1h-1zM620 644h2v2h-2zM899 519h2v2h-2zM1103 718h2v2h-2zM826 842h2v2h-2zM2630 612h2v2h-2zM2835 809h2v2h-2zM2763 1131h2v2h-2zM2353 737h1v1h-1zM2277 1060h2v2h-2zM2557 934h2v2h-2zM1029 1041h2v2h-2zM1513 1113h2v2h-2z" fill="#333"/>
  </svg>

  <div class="mat">
    <div class="phead"><h2>Materialien</h2><button aria-label="Lösen"><svg class="i26"><use href="#rst"/></svg></button><button aria-label="Schließen"><svg class="i22"><use href="#bx"/></svg></button></div>
    <nav class="submenu"><a href="#">Gehe zu</a><a href="#">Bearbeiten</a><a href="#">Selektion</a><a href="#">Ansicht</a><a href="#">Einstellungen</a></nav>
    <div class="bar tbar">
      <div class="combo c1"><svg class="i30"><use href="#tstruct"/></svg><select aria-label="Kategorie"><option>Struktur</option></select><svg class="i18"><use href="#chev"/></svg></div><button class="step l" aria-label="Vorherige Kategorie"></button><button class="step r" aria-label="Nächste Kategorie"></button><i class="sep"></i><i class="edge"></i>
      <div class="combo c2"><svg class="i30"><use href="#mem"/></svg><select aria-label="Objekte"><option>Basisobjekte</option></select><svg class="i18"><use href="#chev"/></svg></div><button class="step l" aria-label="Vorherige Objekte"></button><button class="step r" aria-label="Nächste Objekte"></button><i class="sep"></i>
      <button class="tb on" aria-label="Grafik zu Tabelle"><svg class="ic"><use href="#sel1"/></svg></button><button class="tb on" aria-label="Tabelle zu Grafik"><svg class="ic"><use href="#sel2"/></svg></button><i class="sep"></i><button class="tb" aria-label="Tabelle"><svg class="ic"><use href="#tg"/></svg></button><button class="tb" aria-label="Markieren"><svg class="ic"><use href="#ty"/></svg></button><button class="tb" aria-label="Addieren"><svg class="ic"><use href="#tplus"/></svg></button><button class="tb" aria-label="Multiplizieren"><svg class="ic"><use href="#tmul"/></svg></button><button class="tb" aria-label="Dividieren"><svg class="ic"><use href="#tdiv"/></svg></button><i class="sep"></i><button class="tb" aria-label="Tabelle leeren"><svg class="ic"><use href="#tdel"/></svg></button><i class="sep"></i><button class="tb" aria-label="Zeile kopieren"><svg class="ic"><use href="#r1"/></svg></button><button class="tb" aria-label="Zeile löschen"><svg class="ic"><use href="#r2"/></svg></button><button class="tb" aria-label="Zeile einfügen"><svg class="ic"><use href="#r3"/></svg></button><button class="tb" aria-label="Zeile entfernen"><svg class="ic"><use href="#r4"/></svg></button><i class="sep"></i><button class="tb" aria-label="Kopfzeile"><svg class="ic"><use href="#hdr"/></svg></button><i class="sep"></i><button class="tb" aria-label="Parameter"><svg class="ic" viewBox="0 0 36 36"><path d="M16 2h18v13H16z" fill="#fff" stroke="#777" stroke-width="2.500"/><path d="M20 0h15v5H20z" fill="#26268c"/><text x="0" y="34" class="tm b t19">ab=</text></svg></button><button class="tb" aria-label="Formel"><svg class="ic" viewBox="0 0 36 36"><text x="3" y="25" class="tm tg t30">fx</text></svg></button><button class="tb" aria-label="Formel löschen"><svg class="ic" viewBox="0 0 36 36"><text x="1" y="29" class="tm tg t30">fx</text><path d="M17 2l16 17M33 2L17 19" stroke="#999" stroke-width="4"/></svg></button><button class="tb" aria-label="Formel zeigen"><svg class="ic" viewBox="0 0 36 36"><text x="1" y="29" class="tm b t30">fx</text><use href="#eye"/></svg></button><i class="sep"></i><button class="tb" aria-label="Excel"><svg class="ic"><use href="#xls"/></svg></button><i class="sep"></i><button class="tb" aria-label="Tabelleneinstellung"><svg class="ic"><use href="#hand"/></svg></button><i class="edge"></i><button class="tb" aria-label="Einheiten"><svg class="ic" viewBox="0 0 36 36"><path d="M1 1h34v10H1z" fill="#98e08c" stroke="#5a9a50"/><path d="M6 5v6M12 5v6M18 5v6M24 5v6M30 5v6" class="g" stroke-width="1"/><text x="0" y="31" class="ti t19">0,<tspan fill="#3a6ae0">00</tspan></text><path d="M16 35h20" stroke="#3a6ae0" stroke-width="2"/></svg></button><i class="sep"></i><button class="tb" aria-label="Hilfe"><svg class="ic" viewBox="0 0 36 36"><path d="M18 2a14 14 0 1 1-5 27L2 35l5-10A14 14 0 0 1 18 2z" class="fg"/><text x="12" y="24" class="ti tw2 b t22">?</text></svg></button><i class="edge"></i>
    </div>
    <div class="tabwrap">
      <div class="tscroll">
      <table>
        <colgroup><col class="w120"><col class="w500"><col class="w280"><col class="w400"><col class="w200"><col class="w200"><col class="w200"><col class="w200"><col class="w200"><col class="w200"></colgroup>
        <thead>
          <tr class="strip"><td></td><td class="act"></td><td></td><td></td><td></td><td></td><td></td><td></td><td></td><td></td></tr>
          <tr><th class="rh">Material<br>Nr.</th><th>Name des Materials</th><th>Material-<br>typ</th><th>Materialmodell</th><th>Elastizitätsmodul<br>E [N/mm<sup>2</sup>]</th><th>Schubmodul<br>G [N/mm<sup>2</sup>]</th><th>Querdehnzahl<br>ν [--]</th><th>Spez. Gewicht<br>γ [kN/m<sup>3</sup>]</th><th>Dichte<br>ρ [kg/m<sup>3</sup>]</th><th>Wärmedehnzahl<br>α [1/°C]</th></tr>
        </thead>
        <tbody>
          <tr class="one"><th>1</th><td class="seln"><i class="chip blue"></i>S355H</td><td><i class="chip orange"></i>Stahl</td><td><i class="chip cyan"></i>Isotrop | Linear elastisch</td><td class="num">210000.0</td><td class="num">80769.2</td><td class="num">0.300</td><td class="num">78.50</td><td class="num">7850.00</td><td class="num">0.000012</td></tr>
          <tr class="two"><th>2</th><td><i class="chip brown"></i>Bent Dummy</td><td><i class="chip cyan"></i>Basis</td><td><i class="chip cyan"></i>Isotrop | Linear elastisch</td><td class="num">505000.0</td><td class="num">78800.0</td><td class="num nu">2.204</td><td class="num">0.00</td><td class="num">0.01</td><td class="num">83333333.333</td></tr>
          <tr><th>3</th><td></td><td></td><td></td><td></td><td></td><td class="nu"></td><td></td><td></td><td></td></tr>
          <tr><th>4</th><td></td><td></td><td></td><td></td><td></td><td class="nu"></td><td></td><td></td><td></td></tr>
          <tr><th>5</th><td></td><td></td><td></td><td></td><td></td><td class="nu"></td><td></td><td></td><td></td></tr>
          <tr><th>6</th><td></td><td></td><td></td><td></td><td></td><td class="nu"></td><td></td><td></td><td></td></tr>
          <tr><th>7</th><td></td><td></td><td></td><td></td><td></td><td class="nu"></td><td></td><td></td><td></td></tr>
          <tr><th>8</th><td></td><td></td><td></td><td></td><td></td><td class="nu"></td><td></td><td></td><td></td></tr>
          <tr><th>9</th><td></td><td></td><td></td><td></td><td></td><td class="nu"></td><td></td><td></td><td></td></tr>
        </tbody>
      </table>
      </div>
      <div class="vscroll tsc"><i></i></div>
    </div>
    <div class="hscroll"><i></i></div>
    <div class="ttabs">
      <button class="pg" aria-label="Erste"><svg class="i22" viewBox="0 0 22 22"><path d="M3 3h3v16H3zM17 3v16L7 11z" fill="#888"/></svg></button><button class="pg" aria-label="Zurück"><svg class="i22" viewBox="0 0 22 22"><path d="M16 3v16L6 11z" fill="#888"/></svg></button><span class="pos">1 von 13</span><button class="pg" aria-label="Weiter"><svg class="i22" viewBox="0 0 22 22"><path d="M6 3v16l10-8z" fill="#444"/></svg></button><button class="pg" aria-label="Letzte"><svg class="i22" viewBox="0 0 22 22"><path d="M16 3h3v16h-3zM5 3v16l10-8z" fill="#444"/></svg></button>
      <button class="tab cur">Materialien</button><button class="tab">Querschnitte</button><button class="tab">Dicken</button><button class="tab">Knoten</button><button class="tab">Linien</button><button class="tab">Stäbe</button><button class="tab">Flächen</button><button class="tab">Öffnungen</button><button class="tab">Volumenkörper</button><button class="tab">Liniensätze</button><button class="tab">Stabsätze</button><button class="tab">Flächensätze</button><button class="tab">Volumensätze</button>
    </div>
  </div>
</section>
</main>

<div class="bar bottom">
<button class="tb" aria-label="Koordinatensystem"><svg class="ic"><use href="#axes"/></svg></button><div class="combo cks"><i class="sw"></i><select aria-label="System"><option>1 - Global XYZ</option></select><svg class="i18"><use href="#chev"/></svg></div><i class="sep"></i>
<button class="tb" aria-label="Neue Ansicht"><svg class="ic"><use href="#v1"/></svg></button><button class="tb" aria-label="Ansicht oben"><svg class="ic"><use href="#v2"/></svg></button><button class="tb" aria-label="Ansicht Seite"><svg class="ic"><use href="#v3"/></svg></button><button class="tb" aria-label="Ansicht räumlich"><svg class="ic"><use href="#v4"/></svg></button><button class="tb" aria-label="Clipping"><svg class="ic"><use href="#v5"/></svg></button><i class="sep"></i>
<button class="tb" aria-label="Objektauswahl"><svg class="ic"><use href="#st1"/></svg></button><button class="tb" aria-label="Auswahlgruppe"><svg class="ic"><use href="#st2"/></svg></button><button class="tb" aria-label="Bemaßung"><svg class="ic" viewBox="0 0 36 36"><use href="#star"/><text x="14" y="22" class="ti b t19">x</text><path d="M2 24v12M34 24v12M4 28h28" class="k"/><path d="M2 28l7-4v8zM34 28l-7-4v8z" class="fk"/></svg></button><button class="dd" aria-label="Bemaßungsart"></button><button class="tb" aria-label="Notiz"><svg class="ic" viewBox="0 0 36 36"><use href="#star"/><text x="13" y="22" class="ti b t19">xx</text><path d="M36 26H12L3 34" class="k"/><path d="M0 26v10h10z" class="fk"/></svg></button><button class="tb" aria-label="Visuelles Objekt"><svg class="ic"><use href="#man"/></svg></button><button class="tb" aria-label="Anhang"><svg class="ic"><use href="#clip"/></svg></button><i class="sep"></i>
<button class="tb" aria-label="Messen"><svg class="ic"><use href="#m1"/></svg></button><button class="dd" aria-label="Messart"></button><button class="tb" aria-label="Umnummerieren"><svg class="ic" viewBox="0 0 36 36"><text x="1" y="14" class="ti b t19">2</text><text x="23" y="36" class="ti b t19">6</text><path d="M2 23h9v13H2z" fill="#3a78b4"/><path d="M13 4q14-2 15 10" fill="none" stroke="#5a9ad4" stroke-width="4"/><path d="M21 13h14l-7 8z" fill="#3a78b4"/></svg></button><button class="dd" aria-label="Nummerierung"></button><i class="sep"></i>
<button class="tb" aria-label="Parallel"><svg class="ic"><use href="#e1"/></svg></button><button class="tb" aria-label="Schräg"><svg class="ic"><use href="#e2"/></svg></button><button class="tb" aria-label="Verlängern"><svg class="ic"><use href="#e3"/></svg></button><button class="dd" aria-label="Verlängerungsart"></button><button class="tb" aria-label="Fase"><svg class="ic"><use href="#e4"/></svg></button><button class="tb" aria-label="Rundung"><svg class="ic"><use href="#e5"/></svg></button><button class="tb" aria-label="Versatz"><svg class="ic"><use href="#e6"/></svg></button><button class="tb" aria-label="Teilen"><svg class="ic"><use href="#e7"/></svg></button><button class="tb" aria-label="Richtung"><svg class="ic"><use href="#e8"/></svg></button><button class="tb" aria-label="Polylinie"><svg class="ic"><use href="#e9"/></svg></button><button class="tb" aria-label="Lot"><svg class="ic"><use href="#e10"/></svg></button><i class="sep"></i>
<button class="tb" aria-label="Stablänge"><svg class="ic"><use href="#f1"/></svg></button><button class="dd" aria-label="Stablängenart"></button><button class="tb" aria-label="Stabversatz"><svg class="ic"><use href="#f2"/></svg></button><button class="tb" aria-label="Stab teilen"><svg class="ic"><use href="#f3"/></svg></button><button class="tb" aria-label="Stabrichtung"><svg class="ic"><use href="#f4"/></svg></button>
<div class="snap">
<button class="tb on" aria-label="Raster"><svg class="ic"><use href="#g1"/></svg></button><i class="gap"></i><button class="tb" aria-label="Neues Linienraster"><svg class="ic"><use href="#g2"/></svg></button><button class="tb on" aria-label="Linienraster"><svg class="ic"><use href="#g3"/></svg></button><i class="gap"></i><button class="tb" aria-label="Neue Hilfslinie"><svg class="ic"><use href="#g4"/></svg></button><button class="tb on" aria-label="Hilfslinien"><svg class="ic"><use href="#g5"/></svg></button><i class="gap"></i><i class="gap"></i><button class="tb" aria-label="Ortho"><svg class="ic"><use href="#g6"/></svg></button><i class="gap"></i>
<button class="tb on" aria-label="Rasterfang"><svg class="ic"><use href="#h1"/></svg></button><button class="tb on" aria-label="Objektfang"><svg class="ic"><use href="#h2"/></svg></button><button class="tb on" aria-label="Endpunkt"><svg class="ic"><use href="#h3"/></svg></button><button class="tb on" aria-label="Mittelpunkt"><svg class="ic"><use href="#h4"/></svg></button><button class="tb" aria-label="Schnittpunkt"><svg class="ic"><use href="#h5"/></svg></button><button class="tb on" aria-label="Lotpunkt"><svg class="ic"><use href="#h6"/></svg></button><button class="tb" aria-label="Verlängerung"><svg class="ic"><use href="#h7"/></svg></button><button class="tb" aria-label="Parallelfang"><svg class="ic"><use href="#h8"/></svg></button><button class="tb" aria-label="Tangente"><svg class="ic"><use href="#h9"/></svg></button><button class="tb" aria-label="Zentrum"><svg class="ic"><use href="#h10"/></svg></button><button class="tb" aria-label="Teilungspunkt"><svg class="ic"><use href="#h11"/></svg></button><button class="tb" aria-label="Abstandspunkt"><svg class="ic"><use href="#h12"/></svg></button><button class="tb" aria-label="Punkt auf Linie"><svg class="ic"><use href="#h13"/></svg></button><button class="tb" aria-label="Punktwolke"><svg class="ic"><use href="#h14"/></svg></button><button class="tb on" aria-label="Rasterpunkte"><svg class="ic"><use href="#h15"/></svg></button><button class="tb on" aria-label="Linienrasterfang"><svg class="ic"><use href="#h16"/></svg></button><button class="tb on" aria-label="Hintergrundfolien"><svg class="ic"><use href="#h17"/></svg></button><button class="tb on" aria-label="Stabenden"><svg class="ic"><use href="#h18"/></svg></button><button class="tb on" aria-label="Fangpunkt"><svg class="ic"><use href="#h19"/></svg></button>
</div>
</div>

<footer class="status"><span class="s1">KS: Global XYZ</span><span class="s2">Ebene: XY</span><span class="s3"></span><span class="s3"></span><span class="s3"></span></footer>
</body>
</html>
```
FILE: styles.css
```css
*{box-sizing:border-box}
html,body{margin:0;height:100%}
body{display:flex;flex-direction:column;font:19px/24px "Open Sans","Noto Sans",sans-serif;color:#111;background:#f7f7f7;border-left:2px solid #fff;overflow:hidden}
.sprite{position:absolute;width:0;height:0}
button{margin:0;padding:0;border:0;background:none;font:inherit;color:inherit}
a{color:inherit;text-decoration:none}
h1,h2{margin:0}
svg{flex:none;display:block;overflow:visible}
.ic{width:36px;height:36px}
.i32{width:32px;height:32px}
.i30{width:30px;height:30px}
.i26{width:26px;height:26px}
.i22{width:22px;height:22px}
.i18{width:20px;height:20px}
.i16{width:16px;height:16px}
.k{fill:none;stroke:#1a1a1a;stroke-width:2}
.g{fill:none;stroke:#696969;stroke-width:2}
.lg{fill:none;stroke:#a0a0a0;stroke-width:2}
.fk{fill:#1a1a1a}
.fg{fill:#636363}
.flg{fill:#adadad}
.ti{font-family:"Liberation Sans",sans-serif;fill:#222}
.tm{font-family:"Liberation Serif",serif;font-style:italic;fill:#111}
.tg{fill:#6a6a6a}
.tw2{fill:#fff}
.b{font-weight:700}
.t15{font-size:15px}
.t17{font-size:17px}
.t19{font-size:19px}
.t22{font-size:22px}
.t30{font-size:30px}

.titlebar{flex:none;display:flex;align-items:center;height:59px;padding:12px 29px 0 2px;background:linear-gradient(#ecebe4 12px,#cacaca 12px,#cacaca 14px,#eef3fb 14px)}
.titlebar h1{flex:1;margin-left:2px;font-weight:400;font-size:22px;line-height:30px}
.wbtns{display:flex}
.wbtns button{display:grid;place-items:center;width:46px;height:36px;margin-left:46px}
.menubar{flex:none;display:flex;align-items:center;height:41px;border-bottom:1px solid #e2e2e2}
.menubar>a{margin-right:19px}
.menubar>svg{width:32px;margin-right:9px}
.menuright{display:flex;align-items:center;margin-left:auto;padding-right:5px}
.menuright button{margin-left:14px}
.tri{border:7px solid transparent;border-left:10px solid #8c8c8c;border-right:0}
.search{width:460px;height:34px;margin:0 9px 0 6px;padding:0 4px;border:0;background:#e7e7f1;font:inherit}
.search::placeholder{color:#777;opacity:1}
.lic{width:546px;margin-left:9px;white-space:nowrap}

.bar{flex:none;display:flex;align-items:center;height:55px;border-bottom:2px solid #e8e8e8}
.results{display:flex;align-items:center;height:100%}
.tb{flex:none;display:grid;place-items:center;width:43px;height:42px;margin:0 1px;border-radius:3px}
.tb.on{background:#cce6fb;box-shadow:inset 0 0 0 1px #93cbf5}
.dd{flex:none;position:relative;width:25px;height:42px}
.dd::before{content:"";display:block;margin:0 auto;width:0;border:6px solid transparent;border-top:9px solid #222;border-bottom:0}
.dd.off::before{border-top-color:#6a6a6a}
.sep{flex:none;width:12px;height:44px;background:linear-gradient(#999,#999) 50% 0/1px 100% no-repeat}
.results .sep{width:13px}
.tbar .sep{width:14px}
.grip{flex:none;width:18px;height:46px;background:repeating-linear-gradient(#b5b5b5 0 2px,transparent 2px 4px) 5px 0/2px 100% no-repeat}
.brk{flex:none;width:20px;height:54px;background:linear-gradient(#dcdcdc,#dcdcdc) 2px 0/1px 100% no-repeat,repeating-linear-gradient(#b5b5b5 0 2px,transparent 2px 4px) 9px 4px/2px 46px no-repeat}
.edge{flex:none;width:4px;height:54px;border-right:1px solid #dcdcdc}
.pointer{position:absolute;left:8px;top:28px;width:26px;height:40px;z-index:2}
.more{margin:0 6px 8px auto;font-size:30px;color:#333}

.combo{display:flex;align-items:center;height:38px;background:#e7e7f1;padding-right:6px}
.combo select{flex:1;min-width:0;height:100%;border:0;background:none;appearance:none;font:inherit;color:#111;padding:0}
.lf{flex:0 0 540px;padding-left:5px}
.sw{width:23px;height:22px;margin-right:5px;background:#c8ffff}
.gbox{width:60px;height:26px;margin-right:11px;background:#000;color:#fff;font-weight:400;text-align:center}
.step{flex:none;display:grid;place-items:center;width:30px;height:37px;margin-left:1px;background:#e7e7f1}
.step::before{content:"";border:7px solid transparent}
.step.l{background:#d0d0d0}
.step.l::before{border-right:8px solid #555;border-left:0}
.step.r::before{border-left:8px solid #000;border-right:0}

.main{flex:1;min-height:0;display:grid;grid-template-columns:570px minmax(0,1fr);column-gap:8px}
.navi{display:flex;flex-direction:column;min-height:0}
.phead{flex:none;display:flex;align-items:center;height:41px;padding:0 11px 0 10px;background:#d7e4f2}
.phead h2{flex:1;font-size:23px;font-weight:700;color:#3a3a3a}
.phead button{margin-left:17px}
.treewrap{flex:1;min-height:0;display:flex;background:#fff;border:solid #c8c8d4;border-width:2px 2px 1px 1px;overflow:hidden}
.tree{flex:1;min-width:0;list-style:none;margin:0;padding:2px 0 0 2px;font-size:20px}
.tree li{display:flex;align-items:center;height:36px;white-space:nowrap;color:#000}
.tree .l0{padding-left:3px;gap:11px}
.l2{padding-left:40px}
.l3{padding-left:80px}
.lab{display:flex;align-items:center;height:36px;padding-left:3px;gap:10px}
.lab.sel{width:296px;background:#cce8ff}
.tw{flex:none;width:40px;height:36px;display:grid;place-items:center}
.tw.o::before,.tw.c::before{content:"";width:11px;height:11px;border:solid #8a8a8a;border-width:3px 3px 0 0;transform:rotate(45deg)}
.tw.c::before{margin-right:6px}
.tw.o::before{border-color:#222;border-width:0 3px 3px 0;margin-bottom:8px}
.vscroll{flex:none;width:33px;background:#efefef;padding:0 7px}
.vscroll i{display:block;background:#848484}
.nsc{padding-top:34px;padding-bottom:68px}
.nsc i{height:100%}
.ntabs{flex:none;display:flex;align-items:flex-start;height:43px;border:solid #c8c8d4;border-width:0 2px 2px 1px}
.ntabs button{display:grid;place-items:center;width:57px;height:39px;background:#ebebeb;border:solid #c8c8d4;border-width:0 2px 2px 0}
.ntabs .cur{background:#fff;height:43px;border-bottom:0}

.work{display:flex;flex-direction:column;min-height:0;min-width:0}
.view{flex:1;min-height:0;width:100%;background:#fcfcfc;overflow:hidden}
.ax{font:20px "Liberation Sans",sans-serif}
.cubet{font:700 24px "Liberation Sans",sans-serif}
.cubez{font:700 15px "Liberation Sans",sans-serif}
.mat{flex:none;margin-top:8px}
.submenu{display:flex;gap:19px;align-items:center;height:37px;padding-left:8px}
.tbar{height:56px;border-top:1px solid #e2e2e2;border-bottom:2px solid #c8c8d4}
.c1{flex:0 0 400px;margin-left:3px;padding-left:5px;gap:10px}
.c2{flex:0 0 540px;margin-left:3px;padding-left:5px;gap:10px}
.tabwrap{display:flex;height:363px;overflow:hidden;border-left:1px solid #c8c8d4}
.tscroll{flex:1;min-width:0;overflow:hidden;background:#fff}
table{border-collapse:separate;border-spacing:0;table-layout:fixed;width:2500px}
.w120{width:120px}.w200{width:200px}.w280{width:280px}.w400{width:400px}.w500{width:500px}
th{font-weight:400}
td,th{height:32px;padding:2px 5px 0;border:solid #dadada;border-width:0 1px 1px 0;white-space:nowrap;overflow:hidden;line-height:24px}
thead th{height:64px;background:#f0f0f0;vertical-align:bottom;line-height:30px;border-color:#d6d6da}
thead .rh,tbody th{background:#e1e1e1;border-color:#f7f7f7}
.strip td{height:21px;background:#e1e1e1;border-color:#f7f7f7}
.strip .act,.one th{background:#c8c8c8}
sup{font-size:16px;line-height:0;vertical-align:4px}
.num{text-align:right}
.one td{background:#ffffe4}
.one .num{background:#fafadc}
.one .seln{background:#0078d7;color:#fff;outline:1px dotted #d97a2a;outline-offset:-1px}
.two td{color:#1890f5}
.nu{background:#fafaf6}
.chip{display:inline-block;width:22px;height:22px;margin:-4px 10px 0 -1px;vertical-align:middle}
.blue{background:#3a9bf4}.orange{background:#e87530}.brown{background:#8f7e68}.cyan{background:#c8ffff}
.tsc{width:35px;padding:34px 9px 0 7px}
.tsc i{height:196px}
.hscroll{height:36px;padding:8px 282px 8px 35px;background:#efefef;border-bottom:2px solid #c8c8d4}
.hscroll i{display:block;height:18px;background:#848484}
.ttabs{display:flex;align-items:flex-start;height:38px}
.pg{display:grid;place-items:center;width:34px;height:37px}
.pos{width:122px;text-align:center;line-height:38px}
.tab{min-width:91px;height:37px;padding:0 9px;background:#ececec;border:solid #c8c8d4;border-width:0 2px 2px 0}
.tab.cur{background:#fff;height:38px;border-bottom-color:#ddd}

.bottom{height:49px;border:0;border-top:1px solid #e2e2e2;background:linear-gradient(#f7f7f7,#eee)}
.bottom .tb{width:39px;height:38px}
.bottom .dd{width:24px}
.bottom .sep{width:14px;height:38px}
.bottom .ic{width:32px;height:32px}
.cks{flex:0 0 400px;margin:0 0 0 2px;padding-left:5px}
.cks .sw{margin-right:10px}
.snap{display:flex;margin-left:auto;padding-right:4px}
.gap{width:14px}
.status{flex:none;display:flex;height:36px;justify-content:flex-end;border-bottom:2px solid #bbb;background:linear-gradient(90deg,#e6e6f0 14%,rgba(230,230,240,0) 22%,rgba(230,230,240,0) 78%,#e6e6f0 88%),linear-gradient(#dadae4,#cacad4)}
.status span{border-left:1px solid #c6c6d0;line-height:35px;padding-left:5px;margin:1px 0}
.s1{width:408px}
.s2{width:126px}
.s3{width:146px}
```
